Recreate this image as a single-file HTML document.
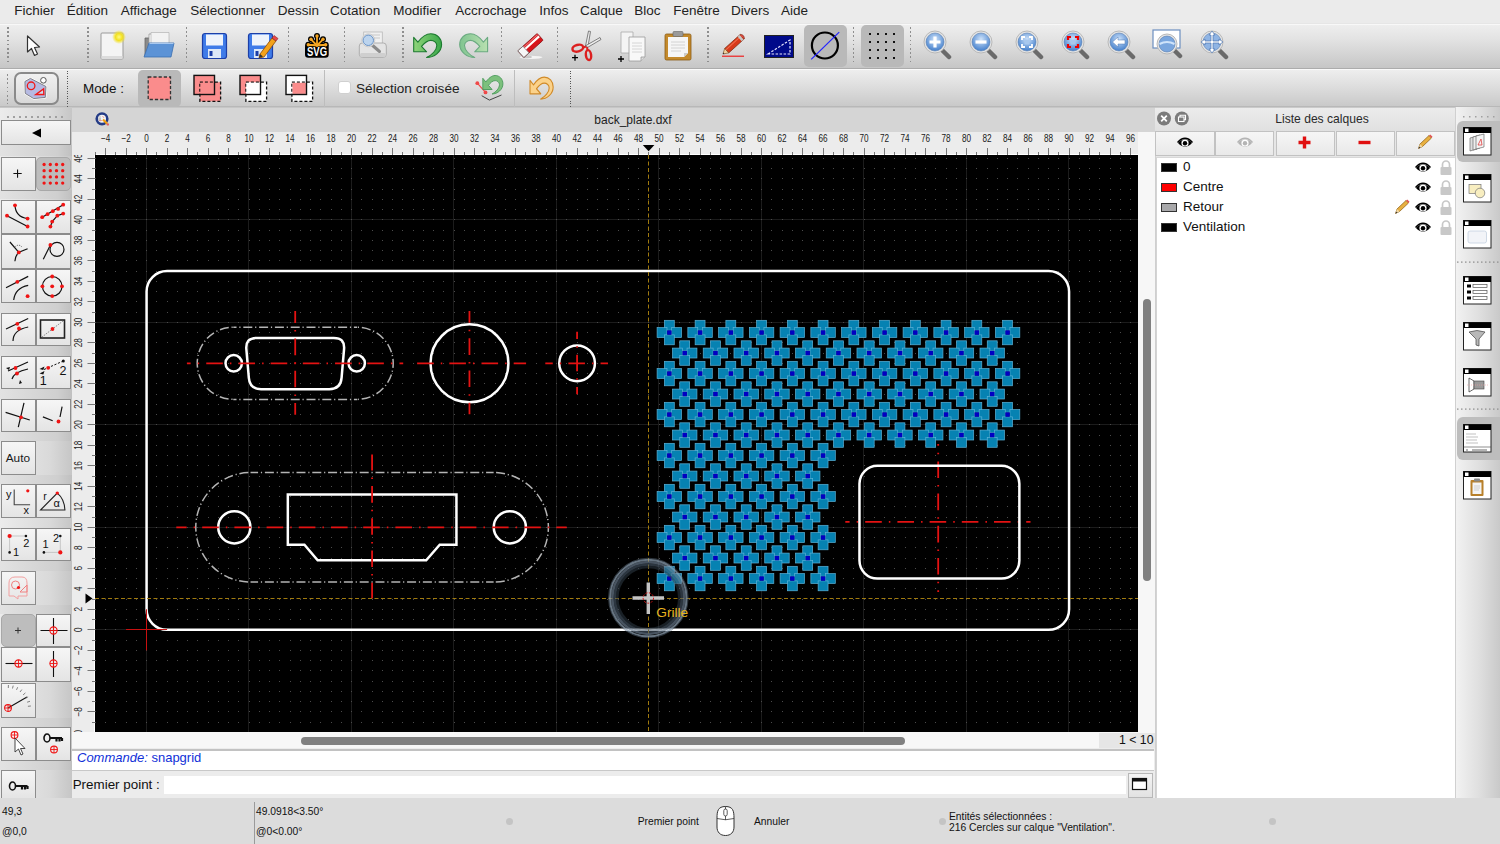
<!DOCTYPE html><html><head><meta charset="utf-8"><style>
*{margin:0;padding:0;box-sizing:border-box}
html,body{width:1500px;height:844px;overflow:hidden;background:#e6e6e6;font-family:"Liberation Sans",sans-serif;color:#1a1a1a}
.a{position:absolute}
#menubar{left:0;top:0;width:1500px;height:23px;background:#ebebeb;font-size:13.5px}
#menubar span{position:absolute;top:3px;color:#222}
#tb1{left:0;top:23.5px;width:1500px;height:45px;background:linear-gradient(#eeeeee,#e2e2e2 35%,#c6c6c6);border-top:1px solid #f8f8f8;border-bottom:1.5px solid #acacac}
#tb2{left:0;top:68.5px;width:1500px;height:38.5px;background:linear-gradient(#eeeeee,#dedede 45%,#c9c9c9);border-top:1px solid #fafafa;border-bottom:1px solid #b8b8b8}
.vsep{position:absolute;width:1.6px;background:repeating-linear-gradient(#8e8e8e 0 1.6px,transparent 1.6px 4.2px)}
.pressed{position:absolute;background:#b9b9b9;border-radius:5px}
#lefttb{left:0;top:107px;width:72px;height:691px;background:linear-gradient(90deg,#ececec,#d9d9d9 70%,#c6c6c6)}
.btn{position:absolute;width:35px;height:35px;border:1px solid #8c8c8c;background:linear-gradient(#f6f6f6,#e4e4e4)}
.btnp{position:absolute;width:35px;height:35px;border:1px solid #a8a8a8;border-radius:5px;background:#bdbdbd}
#status{left:0;top:798px;width:1500px;height:46px;background:#dcdcdc;font-size:10px;color:#1a1a1a}
.sdot{position:absolute;width:8px;height:8px;border-radius:4px;background:#c4c4c4}
</style></head><body>
<div id="menubar" class="a">
<span style="left:14.3px">Fichier</span>
<span style="left:66.7px">Édition</span>
<span style="left:120.7px">Affichage</span>
<span style="left:190.3px">Sélectionner</span>
<span style="left:277.7px">Dessin</span>
<span style="left:330px">Cotation</span>
<span style="left:393.3px">Modifier</span>
<span style="left:455.3px">Accrochage</span>
<span style="left:539.3px">Infos</span>
<span style="left:580px">Calque</span>
<span style="left:634.3px">Bloc</span>
<span style="left:673.3px">Fenêtre</span>
<span style="left:731px">Divers</span>
<span style="left:781px">Aide</span>
</div>
<div id="tb1" class="a"></div>
<div class="vsep" style="left:7.2px;top:27px;height:38px"></div>
<div class="vsep" style="left:87.2px;top:27px;height:38px"></div>
<div class="vsep" style="left:185.6px;top:27px;height:38px"></div>
<div class="vsep" style="left:287.8px;top:27px;height:38px"></div>
<div class="vsep" style="left:343.8px;top:27px;height:38px"></div>
<div class="vsep" style="left:402.2px;top:27px;height:38px"></div>
<div class="vsep" style="left:500.59999999999997px;top:27px;height:38px"></div>
<div class="vsep" style="left:556.8000000000001px;top:27px;height:38px"></div>
<div class="vsep" style="left:707.2px;top:27px;height:38px"></div>
<div class="vsep" style="left:852.8000000000001px;top:27px;height:38px"></div>
<div class="vsep" style="left:909.6px;top:27px;height:38px"></div>
<div class="pressed" style="left:804px;top:25px;width:43px;height:42px"></div>
<div class="pressed" style="left:861px;top:25px;width:43px;height:42px"></div>
<div id="tb2" class="a"></div>
<div class="vsep" style="left:6.5px;top:74px;height:30px"></div>
<div class="a" style="left:14.3px;top:72px;width:44.5px;height:32.5px;border:2px solid #8a8a8a;border-radius:7px;background:linear-gradient(#f0f0f0,#e6e6e6 50%,#d8d8d8)"></div>
<div class="vsep" style="left:66.5px;top:71px;height:36px;width:1px;background:repeating-linear-gradient(#555 0 1px,transparent 1px 2.5px)"></div>
<div class="a" style="left:83px;top:81px;font-size:13.4px;color:#111">Mode :</div>
<div class="pressed" style="left:138px;top:70px;width:43px;height:37px"></div>
<div class="a" style="left:324px;top:70px;width:1px;height:37px;background:#fafafa;border-left:1px solid #bdbdbd"></div>
<div class="a" style="left:337.5px;top:81px;width:13px;height:13px;border-radius:3px;background:#fff;border:1px solid #d0d0d0"></div>
<div class="a" style="left:356px;top:80.5px;font-size:13.6px;color:#222">Sélection croisée</div>
<div class="a" style="left:514px;top:70px;width:1px;height:37px;background:#fafafa;border-left:1px solid #bdbdbd"></div>
<div class="vsep" style="left:569.5px;top:71px;height:36px;width:1px;background:repeating-linear-gradient(#555 0 1px,transparent 1px 2.5px)"></div>
<svg class="a" style="left:25px;top:34px;" width="18" height="24" viewBox="0 0 18 24"><path d="M2.5 2 L2.5 18 L6.5 14.5 L9.5 21.5 L12.5 20 L9.5 13.5 L14.5 13 Z" fill="#fff" stroke="#333" stroke-width="1.2" stroke-linejoin="round"/></svg>
<svg class="a" style="left:98px;top:30px;" width="30" height="32" viewBox="0 0 30 32"><defs><radialGradient id="glow"><stop offset="0" stop-color="#fffb80"/><stop offset="0.5" stop-color="#f2e020"/><stop offset="1" stop-color="#f2e020" stop-opacity="0"/></radialGradient></defs><rect x="3" y="3" width="22" height="26" rx="1" fill="#f4f4f4" stroke="#9a9a9a" stroke-width="1"/><rect x="3.5" y="26" width="21" height="3" fill="#dcdcdc"/><circle cx="21" cy="7" r="7" fill="url(#glow)"/></svg>
<svg class="a" style="left:141px;top:30px;" width="36" height="32" viewBox="0 0 36 32"><path d="M4 8 L14 8 L16 6 L24 6 L24 26 L4 26 Z" fill="#8a8a8a" stroke="#666" stroke-width="0.8"/><path d="M8 4 L27 4 L27 20 L8 20 Z" fill="#fafafa" stroke="#999" stroke-width="0.8"/><path d="M10 2.5 L28 2.5 L28 18 L10 18 Z" fill="#f2f2f2" stroke="#aaa" stroke-width="0.6"/><path d="M3 27 L8 13 L33 13 L30 27 Z" fill="#5c93d6" stroke="#3b6fb0" stroke-width="0.8"/><path d="M8.5 13.5 L32.5 13.5" stroke="#a9c8ee" stroke-width="1"/></svg>
<svg class="a" style="left:201px;top:32px;" width="28" height="29" viewBox="0 0 28 29"><rect x="1.5" y="1.5" width="24" height="25" rx="2.5" fill="#3f7be8" stroke="#1c3fa8" stroke-width="1.2"/><rect x="5" y="2.5" width="17" height="11" fill="#eef3fb"/><rect x="7" y="17" width="13" height="9" fill="#dde8f8"/><rect x="8.5" y="19" width="3" height="5" fill="#1c3fa8"/></svg>
<svg class="a" style="left:247px;top:30px;" width="33" height="31" viewBox="0 0 33 31"><g transform="translate(0,2)"><rect x="1.5" y="1.5" width="24" height="25" rx="2.5" fill="#3f7be8" stroke="#1c3fa8" stroke-width="1.2"/><rect x="5" y="2.5" width="17" height="11" fill="#eef3fb"/><rect x="7" y="17" width="13" height="9" fill="#dde8f8"/><rect x="8.5" y="19" width="3" height="5" fill="#1c3fa8"/><path d="M13 22 L25 6 L29 9 L17 25 L12 26 Z" fill="#f3a21b" stroke="#8a4a06" stroke-width="0.8"/><path d="M25 6 L27 3.5 L31 6.5 L29 9 Z" fill="#e84848" stroke="#8a2020" stroke-width="0.6"/><path d="M12 26 L13 22 L16 24.5 Z" fill="#333"/></g></svg>
<svg class="a" style="left:303px;top:32px;" width="28" height="28" viewBox="0 0 28 28"><path d="M14 13.5 L5.3 12.7" stroke="#000" stroke-width="4.2" stroke-linecap="round"/><path d="M14 13.5 L8 7.3" stroke="#000" stroke-width="4.2" stroke-linecap="round"/><path d="M14 13.5 L14 4" stroke="#000" stroke-width="4.2" stroke-linecap="round"/><path d="M14 13.5 L20 7.3" stroke="#000" stroke-width="4.2" stroke-linecap="round"/><path d="M14 13.5 L22.7 12.7" stroke="#000" stroke-width="4.2" stroke-linecap="round"/><circle cx="5.3" cy="12.7" r="3" fill="#000"/><circle cx="8" cy="7.3" r="3" fill="#000"/><circle cx="14" cy="4" r="3" fill="#000"/><circle cx="20" cy="7.3" r="3" fill="#000"/><circle cx="22.7" cy="12.7" r="3" fill="#000"/><rect x="2" y="11.5" width="23.7" height="14.2" rx="3.2" fill="#000"/><path d="M14 13.5 L5.3 12.7" stroke="#f5a623" stroke-width="1.8" stroke-linecap="round"/><path d="M14 13.5 L8 7.3" stroke="#f5a623" stroke-width="1.8" stroke-linecap="round"/><path d="M14 13.5 L14 4" stroke="#f5a623" stroke-width="1.8" stroke-linecap="round"/><path d="M14 13.5 L20 7.3" stroke="#f5a623" stroke-width="1.8" stroke-linecap="round"/><path d="M14 13.5 L22.7 12.7" stroke="#f5a623" stroke-width="1.8" stroke-linecap="round"/><circle cx="5.3" cy="12.7" r="1.7" fill="#f5a623"/><circle cx="8" cy="7.3" r="1.7" fill="#f5a623"/><circle cx="14" cy="4" r="1.7" fill="#f5a623"/><circle cx="20" cy="7.3" r="1.7" fill="#f5a623"/><circle cx="22.7" cy="12.7" r="1.7" fill="#f5a623"/><path d="M4.5 13.3 H23.3" stroke="#f5a623" stroke-width="1.6"/><text transform="translate(14 24.3) scale(0.78 1)" text-anchor="middle" font-family="Liberation Sans" font-weight="bold" font-size="12.2" fill="#fff">SVG</text></svg>
<svg class="a" style="left:357px;top:30px;" width="32" height="30" viewBox="0 0 32 30"><rect x="6.7" y="2" width="18.6" height="15" fill="#f0f0f0" stroke="#b8b8b8" stroke-width="0.8"/><path d="M9 5 h14 M9 8 h14" stroke="#c8c8c8" stroke-width="1"/><rect x="2.3" y="13" width="27" height="14.3" rx="3" fill="#e4e4e4" stroke="#a8a8a8" stroke-width="0.9"/><rect x="3" y="23" width="25.6" height="4" rx="1.5" fill="#cfcfcf"/><path d="M14.5 14.5 L22.5 21.5" stroke="#8a8a8a" stroke-width="3" stroke-linecap="round"/><circle cx="11.3" cy="10.3" r="6.5" fill="#e8e8e8" stroke="#c4c4c4" stroke-width="0.8"/><circle cx="11.3" cy="10.3" r="5.2" fill="#bcd4ee" stroke="#6a94c8" stroke-width="1"/></svg>
<svg class="a" style="left:412px;top:30px;" width="32" height="32" viewBox="0 0 32 32"><defs><linearGradient id="ug" x1="0" y1="0" x2="1" y2="0"><stop offset="0" stop-color="#8fd47a"/><stop offset="1" stop-color="#3aa84a"/></linearGradient></defs><path d="M1.7 7.4 L5.9 12.2 C9 8 14 3.8 18.8 3.8 C25 3.8 29.6 8.5 29.6 14.5 C29.6 22 22 27.5 14.6 27.5 C20 25 24.8 20 24.8 15.5 C24.8 12.5 22 10.4 18.8 10.4 C15 10.4 12 13.5 9.5 16.4 L14.6 21.8 L1.7 21.8 Z" fill="url(#ug)" stroke="#1d7a30" stroke-width="1.1" stroke-linejoin="round"/></svg>
<svg class="a" style="left:458px;top:30px;" width="32" height="32" viewBox="0 0 32 32"><defs><linearGradient id="rg" x1="0" y1="0" x2="1" y2="0"><stop offset="0" stop-color="#b8e0b0"/><stop offset="1" stop-color="#80c490"/></linearGradient></defs><g transform="translate(31.3,0) scale(-1,1)"><path d="M1.7 7.4 L5.9 12.2 C9 8 14 3.8 18.8 3.8 C25 3.8 29.6 8.5 29.6 14.5 C29.6 22 22 27.5 14.6 27.5 C20 25 24.8 20 24.8 15.5 C24.8 12.5 22 10.4 18.8 10.4 C15 10.4 12 13.5 9.5 16.4 L14.6 21.8 L1.7 21.8 Z" fill="url(#rg)" stroke="#6aaa80" stroke-width="1.1" stroke-linejoin="round"/></g></svg>
<svg class="a" style="left:515px;top:30px;" width="32" height="32" viewBox="0 0 32 32"><ellipse cx="16" cy="27.3" rx="11.5" ry="1.6" fill="#f4f4f4"/><ellipse cx="12" cy="27" rx="5" ry="1.2" fill="#9a9a9a" opacity="0.5"/><g transform="rotate(-42 15.5 15.5)"><rect x="2.5" y="11" width="26" height="9" rx="1" fill="#d8141a" stroke="#8a0c10" stroke-width="0.8"/><rect x="2.5" y="11" width="7" height="9" fill="#f6f6f6" stroke="#777" stroke-width="0.8"/><path d="M9.5 14.5 H28" stroke="#fff" stroke-width="2.2"/><path d="M9.5 12.2 H28" stroke="#f07070" stroke-width="1"/></g></svg>
<svg class="a" style="left:569px;top:29px;" width="34" height="36" viewBox="0 0 34 36"><path d="M19.5 2 L21.5 2.5 L19 17.5 L16.5 17 Z" fill="#ececec" stroke="#666" stroke-width="0.8"/><path d="M31 8.5 L32 10.5 L18.5 18.5 L17 16.5 Z" fill="#ececec" stroke="#666" stroke-width="0.8"/><ellipse cx="8.8" cy="19.2" rx="5.5" ry="3.3" transform="rotate(-15 8.8 19.2)" fill="none" stroke="#dc2020" stroke-width="2.4"/><ellipse cx="19.5" cy="26.1" rx="2.6" ry="5" transform="rotate(-8 19.5 26.1)" fill="none" stroke="#dc2020" stroke-width="2.4"/><path d="M14 18.5 L17 17.5 M18.5 21 L18 18" stroke="#dc2020" stroke-width="2"/><path d="M3 28.7 h6 M6 25.7 v6" stroke="#000" stroke-width="1.3"/></svg>
<svg class="a" style="left:615px;top:29px;" width="36" height="36" viewBox="0 0 36 36"><path d="M6 3 L18 3 L18 24 L6 24 Z" fill="#f4f4f4" stroke="#aaa" stroke-width="0.8"/><path d="M14 8 L30 8 L30 28 L26 32 L14 32 Z" fill="#f8f8f8" stroke="#999" stroke-width="0.8"/><path d="M26 32 L26 28 L30 28" fill="#ddd" stroke="#999" stroke-width="0.8"/><path d="M17 14h10M17 17h10M17 20h10M17 23h10" stroke="#ccc" stroke-width="0.8"/><path d="M3 30 h6 M6 27 v6" stroke="#000" stroke-width="1.3"/></svg>
<svg class="a" style="left:662px;top:30px;" width="32" height="32" viewBox="0 0 32 32"><rect x="3" y="4" width="26" height="26" rx="1.5" fill="#c48a2c" stroke="#8a5a14" stroke-width="0.8"/><path d="M6 7 L26 7 L26 23 L22 27 L6 27 Z" fill="#f6f6f6"/><path d="M22 27 L22 23 L26 23" fill="#ccc"/><path d="M9 12h14M9 15h14M9 18h14M9 21h10" stroke="#ccc" stroke-width="0.8"/><rect x="11" y="1.5" width="10" height="5" rx="1" fill="#9a9a9a" stroke="#666" stroke-width="0.6"/></svg>
<svg class="a" style="left:720px;top:30px;overflow:visible" width="28" height="30" viewBox="0 0 28 30"><g transform="rotate(-42 13 15)"><rect x="4.5" y="12" width="21" height="6" fill="#d83a1a" stroke="#7a2a10" stroke-width="0.7"/><path d="M4.5 13.8 H25.5" stroke="#f07050" stroke-width="1"/><rect x="22" y="12" width="2.5" height="6" fill="#c8c8c8"/><path d="M25.5 12 Q28.5 15 25.5 18" fill="#e84040" stroke="#7a2a10" stroke-width="0.6"/><path d="M4.5 12 L-0.5 15 L4.5 18 Z" fill="#f2d2a0" stroke="#7a4a20" stroke-width="0.6"/><path d="M0.8 14.2 L-0.5 15 L0.8 15.8 Z" fill="#222"/></g><path d="M2 26.2 h22" stroke="#f01010" stroke-width="1.1"/></svg>
<svg class="a" style="left:764px;top:35px;" width="30" height="23" viewBox="0 0 30 23"><rect x="0.5" y="0.5" width="29" height="22" fill="#000a8a" stroke="#222" stroke-width="1"/><path d="M4 19 L26 5 L26 19 Z" fill="none" stroke="#e8e8ff" stroke-width="1.2" stroke-dasharray="2.5 1.5"/></svg>
<svg class="a" style="left:808px;top:26px;" width="36" height="36" viewBox="0 0 36 36"><circle cx="16.9" cy="19.5" r="13" fill="none" stroke="#000" stroke-width="2.2"/><path d="M3.2 33.4 L31.2 6.1" stroke="#2222ff" stroke-width="1.2"/></svg>
<svg class="a" style="left:864px;top:30px;" width="36" height="32" viewBox="0 0 36 32"><rect x="5" y="3" width="2" height="2" fill="#111"/><rect x="5" y="11" width="2" height="2" fill="#111"/><rect x="5" y="19" width="2" height="2" fill="#111"/><rect x="5" y="27" width="2" height="2" fill="#111"/><rect x="13" y="3" width="2" height="2" fill="#111"/><rect x="13" y="11" width="2" height="2" fill="#111"/><rect x="13" y="19" width="2" height="2" fill="#111"/><rect x="13" y="27" width="2" height="2" fill="#111"/><rect x="21" y="3" width="2" height="2" fill="#111"/><rect x="21" y="11" width="2" height="2" fill="#111"/><rect x="21" y="19" width="2" height="2" fill="#111"/><rect x="21" y="27" width="2" height="2" fill="#111"/><rect x="29" y="3" width="2" height="2" fill="#111"/><rect x="29" y="11" width="2" height="2" fill="#111"/><rect x="29" y="19" width="2" height="2" fill="#111"/><rect x="29" y="27" width="2" height="2" fill="#111"/></svg>
<svg class="a" style="left:923.3px;top:29.8px;" width="30" height="30" viewBox="0 0 30 30"><defs><radialGradient id="lg935" cx="0.5" cy="0.35" r="0.6"><stop offset="0" stop-color="#cfe3fa"/><stop offset="1" stop-color="#4d86cf"/></radialGradient></defs><path d="M19 20 L26 27" stroke="#6a6a6a" stroke-width="4.5" stroke-linecap="round"/><circle cx="12" cy="12" r="11" fill="#e6e6e6" stroke="#b8b8b8" stroke-width="1"/><circle cx="12" cy="12" r="9" fill="url(#lg935)" stroke="#5a7fb0" stroke-width="0.6"/><path d="M12 6.5 v11 M6.5 12 h11" stroke="#fff" stroke-width="3.2"/></svg>
<svg class="a" style="left:968.8px;top:29.8px;" width="30" height="30" viewBox="0 0 30 30"><defs><radialGradient id="lg980" cx="0.5" cy="0.35" r="0.6"><stop offset="0" stop-color="#cfe3fa"/><stop offset="1" stop-color="#4d86cf"/></radialGradient></defs><path d="M19 20 L26 27" stroke="#6a6a6a" stroke-width="4.5" stroke-linecap="round"/><circle cx="12" cy="12" r="11" fill="#e6e6e6" stroke="#b8b8b8" stroke-width="1"/><circle cx="12" cy="12" r="9" fill="url(#lg980)" stroke="#5a7fb0" stroke-width="0.6"/><path d="M6.5 12 h11" stroke="#fff" stroke-width="3.2"/></svg>
<svg class="a" style="left:1015px;top:29.8px;" width="30" height="30" viewBox="0 0 30 30"><defs><radialGradient id="lg1027" cx="0.5" cy="0.35" r="0.6"><stop offset="0" stop-color="#cfe3fa"/><stop offset="1" stop-color="#4d86cf"/></radialGradient></defs><path d="M19 20 L26 27" stroke="#6a6a6a" stroke-width="4.5" stroke-linecap="round"/><circle cx="12" cy="12" r="11" fill="#e6e6e6" stroke="#b8b8b8" stroke-width="1"/><circle cx="12" cy="12" r="9" fill="url(#lg1027)" stroke="#5a7fb0" stroke-width="0.6"/><path d="M7 10 v-3 h3 M14 7 h3 v3 M17 14 v3 h-3 M10 17 h-3 v-3" fill="none" stroke="#fff" stroke-width="1.8"/><rect x="9.5" y="9.5" width="5" height="5" fill="#a8c8ee"/></svg>
<svg class="a" style="left:1060.8px;top:29.8px;" width="30" height="30" viewBox="0 0 30 30"><defs><radialGradient id="lg1072" cx="0.5" cy="0.35" r="0.6"><stop offset="0" stop-color="#cfe3fa"/><stop offset="1" stop-color="#4d86cf"/></radialGradient></defs><path d="M19 20 L26 27" stroke="#6a6a6a" stroke-width="4.5" stroke-linecap="round"/><circle cx="12" cy="12" r="11" fill="#e6e6e6" stroke="#b8b8b8" stroke-width="1"/><circle cx="12" cy="12" r="9" fill="url(#lg1072)" stroke="#5a7fb0" stroke-width="0.6"/><path d="M7 10 v-3 h3 M14 7 h3 v3 M17 14 v3 h-3 M10 17 h-3 v-3" fill="none" stroke="#e00" stroke-width="2.2"/><rect x="9.5" y="9.5" width="5" height="5" fill="#a8c8ee"/></svg>
<svg class="a" style="left:1107px;top:29.8px;" width="30" height="30" viewBox="0 0 30 30"><defs><radialGradient id="lg1119" cx="0.5" cy="0.35" r="0.6"><stop offset="0" stop-color="#cfe3fa"/><stop offset="1" stop-color="#4d86cf"/></radialGradient></defs><path d="M19 20 L26 27" stroke="#6a6a6a" stroke-width="4.5" stroke-linecap="round"/><circle cx="12" cy="12" r="11" fill="#e6e6e6" stroke="#b8b8b8" stroke-width="1"/><circle cx="12" cy="12" r="9" fill="url(#lg1119)" stroke="#5a7fb0" stroke-width="0.6"/><path d="M5.5 12 L11 7 L11 10 L18 10 L18 14 L11 14 L11 17 Z" fill="#fff" stroke="#4a74b0" stroke-width="0.5"/></svg>
<svg class="a" style="left:1152px;top:29px;" width="36" height="30" viewBox="0 0 36 30"><rect x="1" y="1" width="27" height="18" fill="#fff" stroke="#6d8fc0" stroke-width="1.2"/><path d="M21 20 L28 27" stroke="#6a6a6a" stroke-width="4.5" stroke-linecap="round"/><circle cx="15" cy="15" r="10" fill="#e6e6e6" stroke="#b8b8b8" stroke-width="1"/><circle cx="15" cy="15" r="8" fill="#7aa6de" stroke="#5a7fb0" stroke-width="0.6"/><path d="M7.5 15 Q15 11 22.5 15" fill="none" stroke="#cfe3fa" stroke-width="2"/></svg>
<svg class="a" style="left:1199.9px;top:29.8px;" width="32" height="30" viewBox="0 0 32 30"><path d="M19 20 L26 27" stroke="#6a6a6a" stroke-width="4.5" stroke-linecap="round"/><circle cx="12" cy="12" r="11" fill="#e6e6e6" stroke="#b8b8b8" stroke-width="1"/><circle cx="12" cy="12" r="9" fill="#8fb4e4" stroke="#5a7fb0" stroke-width="0.6"/><path d="M12 1 L15 5 L13 5 L13 11 L19 11 L19 9 L23 12 L19 15 L19 13 L13 13 L13 19 L15 19 L12 23 L9 19 L11 19 L11 13 L5 13 L5 15 L1 12 L5 9 L5 11 L11 11 L11 5 L9 5 Z" fill="#fff" stroke="#4a74b0" stroke-width="0.7"/></svg>
<svg class="a" style="left:22px;top:75px;" width="32" height="26" viewBox="0 0 32 26"><path d="M2.9 6.5 L8.4 3.4 L24 11.5 L23.3 22.4 L11.7 23.6 L3.2 18.4 Z" fill="#b6bae2" stroke="#fff" stroke-width="2.2" stroke-linejoin="round"/><path d="M2.9 6.5 L8.4 3.4 L24 11.5 L23.3 22.4 L11.7 23.6 L3.2 18.4 Z" fill="#b6bae2" stroke="#6a6a6a" stroke-width="0.8" stroke-linejoin="round"/><circle cx="9.1" cy="10.8" r="3.8" fill="none" stroke="#f01818" stroke-width="1.3"/><path d="M13.8 19.5 L21.6 13.9 L21.9 19.5 Z" fill="#c8dcf0" stroke="#f01818" stroke-width="1.4" stroke-linejoin="miter"/><circle cx="21.4" cy="5.3" r="2.8" fill="#fff" stroke="#555" stroke-width="1"/></svg>
<svg class="a" style="left:146px;top:75px;" width="27" height="27" viewBox="0 0 27 27"><rect x="2.2" y="2" width="22.3" height="22.5" fill="#fa8c8c" stroke="#333" stroke-width="1.3" stroke-dasharray="3.2 2"/></svg>
<svg class="a" style="left:192.0px;top:73px;" width="32" height="31" viewBox="0 0 32 31"><rect x="2" y="2.4" width="20.5" height="19.1" fill="#fa8c8c"/><rect x="7.9" y="9.2" width="20.7" height="19.1" fill="#fa8c8c" stroke="#111" stroke-width="1.3" stroke-dasharray="3 2"/><rect x="8.5" y="9.799999999999999" width="13.4" height="11.100000000000001" fill="#fa8c8c"/><rect x="2" y="2.4" width="20.5" height="19.1" fill="none" stroke="#111" stroke-width="1.4"/></svg>
<svg class="a" style="left:238.0px;top:73px;" width="32" height="31" viewBox="0 0 32 31"><rect x="2" y="2.4" width="20.5" height="19.1" fill="#fa8c8c"/><rect x="7.9" y="9.2" width="20.7" height="19.1" fill="#fff" stroke="#111" stroke-width="1.3" stroke-dasharray="3 2"/><rect x="8.5" y="9.799999999999999" width="13.4" height="11.100000000000001" fill="#fff"/><rect x="2" y="2.4" width="20.5" height="19.1" fill="none" stroke="#111" stroke-width="1.4"/></svg>
<svg class="a" style="left:284.0px;top:73px;" width="32" height="31" viewBox="0 0 32 31"><rect x="2" y="2.4" width="20.5" height="19.1" fill="#fff"/><rect x="7.9" y="9.2" width="20.7" height="19.1" fill="#fff" stroke="#111" stroke-width="1.3" stroke-dasharray="3 2"/><rect x="8.5" y="9.799999999999999" width="13.4" height="11.100000000000001" fill="#fa8c8c"/><rect x="2" y="2.4" width="20.5" height="19.1" fill="none" stroke="#111" stroke-width="1.4"/></svg>
<svg class="a" style="left:473px;top:73px;" width="32" height="32" viewBox="0 0 32 32"><path d="M8.7 22.7 L16.4 27.1 L28.5 22" fill="none" stroke="#444" stroke-width="1"/><path d="M4.3 10.2 L12.5 19.4" stroke="#f04848" stroke-width="1.2"/><circle cx="4.3" cy="10.2" r="1.9" fill="#f04848"/><circle cx="12.5" cy="19.4" r="1.9" fill="#f04848"/><g transform="translate(8.6,-0.5) scale(0.72 0.78)"><path d="M1.7 7.4 L5.9 12.2 C9 8 14 3.8 18.8 3.8 C25 3.8 29.6 8.5 29.6 14.5 C29.6 22 22 27.5 14.6 27.5 C20 25 24.8 20 24.8 15.5 C24.8 12.5 22 10.4 18.8 10.4 C15 10.4 12 13.5 9.5 16.4 L14.6 21.8 L1.7 21.8 Z" fill="#7cc07c" stroke="#4a9a5a" stroke-width="1.2" stroke-linejoin="round"/></g></svg>
<svg class="a" style="left:528px;top:73px;" width="28" height="28" viewBox="0 0 28 28"><g transform="translate(0.6,0.5) scale(0.83 0.93)"><path d="M1.7 7.4 L5.9 12.2 C9 8 14 3.8 18.8 3.8 C25 3.8 29.6 8.5 29.6 14.5 C29.6 22 22 27.5 14.6 27.5 C20 25 24.8 20 24.8 15.5 C24.8 12.5 22 10.4 18.8 10.4 C15 10.4 12 13.5 9.5 16.4 L14.6 21.8 L1.7 21.8 Z" fill="#fbd28a" stroke="#d08a28" stroke-width="1.3" stroke-linejoin="round"/></g></svg>
<div id="lefttb" class="a"></div>
<div class="a" style="left:0;top:145.3px;width:72px;height:11.199999999999989px;background:linear-gradient(90deg,#e2e2e2,#cfcfcf 80%,#c0c0c0)"></div>
<div class="a" style="left:0;top:190.3px;width:72px;height:9.199999999999989px;background:linear-gradient(90deg,#e2e2e2,#cfcfcf 80%,#c0c0c0)"></div>
<div class="a" style="left:0;top:303.2px;width:72px;height:9.800000000000011px;background:linear-gradient(90deg,#e2e2e2,#cfcfcf 80%,#c0c0c0)"></div>
<div class="a" style="left:0;top:346px;width:72px;height:10px;background:linear-gradient(90deg,#e2e2e2,#cfcfcf 80%,#c0c0c0)"></div>
<div class="a" style="left:0;top:389px;width:72px;height:9.800000000000011px;background:linear-gradient(90deg,#e2e2e2,#cfcfcf 80%,#c0c0c0)"></div>
<div class="a" style="left:0;top:432.3px;width:72px;height:9.0px;background:linear-gradient(90deg,#e2e2e2,#cfcfcf 80%,#c0c0c0)"></div>
<div class="a" style="left:0;top:475.4px;width:72px;height:8.800000000000011px;background:linear-gradient(90deg,#e2e2e2,#cfcfcf 80%,#c0c0c0)"></div>
<div class="a" style="left:0;top:561px;width:72px;height:9.600000000000023px;background:linear-gradient(90deg,#e2e2e2,#cfcfcf 80%,#c0c0c0)"></div>
<div class="a" style="left:0;top:604.8px;width:72px;height:9.0px;background:linear-gradient(90deg,#e2e2e2,#cfcfcf 80%,#c0c0c0)"></div>
<div class="a" style="left:0;top:717.6px;width:72px;height:9.0px;background:linear-gradient(90deg,#e2e2e2,#cfcfcf 80%,#c0c0c0)"></div>
<div class="a" style="left:0;top:760.5px;width:72px;height:9.0px;background:linear-gradient(90deg,#e2e2e2,#cfcfcf 80%,#c0c0c0)"></div>
<div class="a" style="left:0;top:107px;width:72px;height:1px;background:#c8c8c8"></div>
<svg class="a" style="left:0;top:113px" width="72" height="8"><rect x="7" y="3" width="2" height="2" fill="#a0a0a0"/><rect x="13" y="3" width="2" height="2" fill="#a0a0a0"/><rect x="19" y="3" width="2" height="2" fill="#a0a0a0"/><rect x="25" y="3" width="2" height="2" fill="#a0a0a0"/><rect x="31" y="3" width="2" height="2" fill="#a0a0a0"/><rect x="37" y="3" width="2" height="2" fill="#a0a0a0"/><rect x="43" y="3" width="2" height="2" fill="#a0a0a0"/><rect x="49" y="3" width="2" height="2" fill="#a0a0a0"/><rect x="55" y="3" width="2" height="2" fill="#a0a0a0"/><rect x="61" y="3" width="2" height="2" fill="#a0a0a0"/></svg>
<div class="btn" style="left:1.2px;top:120.2px;width:69.4px;height:25.3px"></div>
<svg class="a" style="left:30px;top:126px;" width="14" height="14" viewBox="0 0 14 14"><path d="M2 7 L11 2.5 L11 11.5 Z" fill="#000"/></svg>
<div class="btn" style="left:1.2px;top:156.5px;width:34.5px;height:34.0px"></div>
<svg class="a" style="left:1.2px;top:156.5px;overflow:visible" width="35" height="34" viewBox="0 0 35 34"><path d="M12.4 16.5 h8.3 M16.55 12.4 v8.3" stroke="#111" stroke-width="1.1"/></svg>
<div class="btnp" style="left:36.3px;top:156.5px;width:34.5px;height:34.0px"></div>
<svg class="a" style="left:36.3px;top:156.5px;overflow:visible" width="35" height="34" viewBox="0 0 35 34"><circle cx="8.1" cy="7.5" r="1.65" fill="#f01414"/><circle cx="8.1" cy="13.7" r="1.65" fill="#f01414"/><circle cx="8.1" cy="19.9" r="1.65" fill="#f01414"/><circle cx="8.1" cy="26.1" r="1.65" fill="#f01414"/><circle cx="14.3" cy="7.5" r="1.65" fill="#f01414"/><circle cx="14.3" cy="13.7" r="1.65" fill="#f01414"/><circle cx="14.3" cy="19.9" r="1.65" fill="#f01414"/><circle cx="14.3" cy="26.1" r="1.65" fill="#f01414"/><circle cx="20.5" cy="7.5" r="1.65" fill="#f01414"/><circle cx="20.5" cy="13.7" r="1.65" fill="#f01414"/><circle cx="20.5" cy="19.9" r="1.65" fill="#f01414"/><circle cx="20.5" cy="26.1" r="1.65" fill="#f01414"/><circle cx="26.700000000000003" cy="7.5" r="1.65" fill="#f01414"/><circle cx="26.700000000000003" cy="13.7" r="1.65" fill="#f01414"/><circle cx="26.700000000000003" cy="19.9" r="1.65" fill="#f01414"/><circle cx="26.700000000000003" cy="26.1" r="1.65" fill="#f01414"/></svg>
<div class="btn" style="left:1.2px;top:199.5px;width:34.5px;height:34.5px"></div>
<svg class="a" style="left:1.2px;top:199.5px;overflow:visible" width="35" height="34" viewBox="0 0 35 34"><path d="M6 15.7 L26.6 26.5" stroke="#111" stroke-width="1.2" fill="none"/><path d="M14 5.3 Q14.5 17 26.6 18.6" stroke="#111" stroke-width="1.2" fill="none"/><circle cx="6" cy="15.7" r="1.9" fill="#f01414"/><circle cx="26.6" cy="26.5" r="1.9" fill="#f01414"/><circle cx="14" cy="5.3" r="1.9" fill="#f01414"/><circle cx="26.6" cy="18.6" r="1.9" fill="#f01414"/></svg>
<div class="btn" style="left:36.3px;top:199.5px;width:34.5px;height:34.5px"></div>
<svg class="a" style="left:36.3px;top:199.5px;overflow:visible" width="35" height="34" viewBox="0 0 35 34"><path d="M6.2 17.2 L27.2 4.7 M14.4 26.6 L16.2 21.6 L21.3 15.7 L27.2 13.6" stroke="#111" stroke-width="1.2" fill="none"/><circle cx="6.2" cy="17.2" r="1.9" fill="#f01414"/><circle cx="11.5" cy="14.2" r="1.9" fill="#f01414"/><circle cx="16.8" cy="11.2" r="1.9" fill="#f01414"/><circle cx="22.1" cy="8.9" r="1.9" fill="#f01414"/><circle cx="27.2" cy="4.7" r="1.9" fill="#f01414"/><circle cx="14.4" cy="26.6" r="1.9" fill="#f01414"/><circle cx="16.2" cy="21.6" r="1.9" fill="#f01414"/><circle cx="21.3" cy="15.7" r="1.9" fill="#f01414"/><circle cx="27.2" cy="13.6" r="1.9" fill="#f01414"/></svg>
<div class="btn" style="left:1.2px;top:234px;width:34.5px;height:34.5px"></div>
<svg class="a" style="left:1.2px;top:234px;overflow:visible" width="35" height="34" viewBox="0 0 35 34"><path d="M8.9 8 L17.8 18.4 L26.6 14.8 M17.8 18.4 Q14 22 13.9 27.3" stroke="#111" stroke-width="1.2" fill="none"/><path d="M13 14 Q17 9 21 13" stroke="#333" stroke-width="0.8" fill="none" stroke-dasharray="1 1"/><circle cx="17.8" cy="18.4" r="1.9" fill="#f01414"/></svg>
<div class="btn" style="left:36.3px;top:234px;width:34.5px;height:34.5px"></div>
<svg class="a" style="left:36.3px;top:234px;overflow:visible" width="35" height="34" viewBox="0 0 35 34"><path d="M7.3 25.2 L14.4 11" stroke="#111" stroke-width="1.2" fill="none"/><circle cx="21" cy="15.4" r="7" stroke="#111" stroke-width="1.2" fill="none"/><circle cx="14.4" cy="11" r="1.9" fill="#f01414"/></svg>
<div class="btn" style="left:1.2px;top:268.5px;width:34.5px;height:34.69999999999999px"></div>
<svg class="a" style="left:1.2px;top:268.5px;overflow:visible" width="35" height="35" viewBox="0 0 35 35"><path d="M5 18.7 L27.2 7.4" stroke="#111" stroke-width="1.2" fill="none"/><path d="M12.7 31 Q14 19 27.2 16.3" stroke="#111" stroke-width="1.2" fill="none"/><circle cx="16.3" cy="12.8" r="1.9" fill="#f01414"/><circle cx="26.6" cy="27.2" r="1.9" fill="#f01414"/></svg>
<div class="btn" style="left:36.3px;top:268.5px;width:34.5px;height:34.69999999999999px"></div>
<svg class="a" style="left:36.3px;top:268.5px;overflow:visible" width="35" height="35" viewBox="0 0 35 35"><circle cx="16.2" cy="17.3" r="9.8" stroke="#111" stroke-width="1.2" fill="none"/><circle cx="16.2" cy="17.3" r="1.9" fill="#f01414"/><circle cx="16.2" cy="7.5" r="1.9" fill="#f01414"/><circle cx="16.2" cy="27.1" r="1.9" fill="#f01414"/><circle cx="6.4" cy="17.3" r="1.9" fill="#f01414"/><circle cx="26" cy="17.3" r="1.9" fill="#f01414"/></svg>
<div class="btn" style="left:1.2px;top:313px;width:34.5px;height:33px"></div>
<svg class="a" style="left:1.2px;top:313px;overflow:visible" width="35" height="33" viewBox="0 0 35 33"><path d="M5 16 L27.2 5.5" stroke="#111" stroke-width="1.2" fill="none"/><path d="M12 28 Q12 17 27.2 14" stroke="#111" stroke-width="1.2" fill="none"/><circle cx="16.3" cy="10.8" r="1.9" fill="#f01414"/><circle cx="18" cy="15.5" r="1.9" fill="#f01414"/></svg>
<div class="btn" style="left:36.3px;top:313px;width:34.5px;height:33px"></div>
<svg class="a" style="left:36.3px;top:313px;overflow:visible" width="35" height="33" viewBox="0 0 35 33"><rect x="4.5" y="7" width="24" height="18" fill="none" stroke="#222" stroke-width="1.6"/><path d="M6 24 L27 8" stroke="#777" stroke-width="0.8" stroke-dasharray="1.5 1"/><circle cx="16.5" cy="16" r="1.9" fill="#f01414"/></svg>
<div class="btn" style="left:1.2px;top:356px;width:34.5px;height:33px"></div>
<svg class="a" style="left:1.2px;top:356px;overflow:visible" width="35" height="33" viewBox="0 0 35 33"><path d="M7 15 L27 6 M11 23 Q13 16 27 13" stroke="#111" stroke-width="1.2" fill="none"/><path d="M5 12 l4 -1 l-1 3 z M18 28 l1 -4 l2 3z" fill="#111"/><circle cx="14.5" cy="12" r="1.9" fill="#f01414"/><circle cx="16" cy="17.5" r="1.9" fill="#f01414"/></svg>
<div class="btn" style="left:36.3px;top:356px;width:34.5px;height:33px"></div>
<svg class="a" style="left:36.3px;top:356px;overflow:visible" width="35" height="33" viewBox="0 0 35 33"><path d="M8 13.5 L27.3 5" stroke="#111" stroke-width="1" stroke-dasharray="2.2 1.6"/><path d="M3.5 13 l5 -2.5 l-1.2 3.6 z M3.5 17.5 l5 -2.5 l-1.2 3.6 z" fill="#111"/><circle cx="12.2" cy="11.8" r="1.9" fill="#f01414"/><circle cx="27.3" cy="5" r="1.5" fill="#111"/><text x="3.8" y="28.6" font-size="12.5" font-family="Liberation Sans" fill="#111">1</text><text x="23.6" y="18.8" font-size="12.5" font-family="Liberation Sans" fill="#111">2</text></svg>
<div class="btn" style="left:1.2px;top:398.8px;width:34.5px;height:33.69999999999999px"></div>
<svg class="a" style="left:1.2px;top:398.8px;overflow:visible" width="35" height="34" viewBox="0 0 35 34"><path d="M4.6 13.4 L28.8 21 M23 3.9 L17.3 28.1" stroke="#111" stroke-width="1.2" fill="none"/><circle cx="20" cy="18.3" r="1.9" fill="#f01414"/></svg>
<div class="btn" style="left:36.3px;top:398.8px;width:34.5px;height:33.69999999999999px"></div>
<svg class="a" style="left:36.3px;top:398.8px;overflow:visible" width="35" height="34" viewBox="0 0 35 34"><path d="M6.9 17.9 L16.7 21.8 M26.1 7.7 L24 18" stroke="#111" stroke-width="1.2" fill="none"/><circle cx="22.5" cy="22.5" r="1.9" fill="#f01414"/></svg>
<div class="btn" style="left:1.2px;top:441.3px;width:34.5px;height:34.19999999999999px"></div>
<svg class="a" style="left:1.2px;top:441.3px;overflow:visible" width="35" height="34" viewBox="0 0 35 34"><text x="16.9" y="21.2" text-anchor="middle" font-size="11.8" font-family="Liberation Sans" fill="#1a1a1a">Auto</text></svg>
<div class="btn" style="left:1.2px;top:484.2px;width:34.5px;height:34.099999999999966px"></div>
<svg class="a" style="left:1.2px;top:484.2px;overflow:visible" width="35" height="34" viewBox="0 0 35 34"><path d="M13.2 5.6 L13.2 20.8 L29.1 20.8" fill="none" stroke="#444" stroke-width="1.1"/><text x="5" y="14" font-size="11" font-family="Liberation Sans" fill="#111">y</text><text x="22.5" y="30" font-size="11" font-family="Liberation Sans" fill="#111">x</text><circle cx="26.8" cy="6.8" r="1.6" fill="#f01414"/></svg>
<div class="btn" style="left:36.3px;top:484.2px;width:34.5px;height:34.099999999999966px"></div>
<svg class="a" style="left:36.3px;top:484.2px;overflow:visible" width="35" height="34" viewBox="0 0 35 34"><path d="M4.6 26 L21.3 9.1 Q28.5 15 28.9 26 Z" fill="none" stroke="#222" stroke-width="1.1"/><text x="7.2" y="16.2" font-size="10.5" font-family="Liberation Sans" fill="#111">r</text><text x="17.6" y="23.2" font-size="11" font-family="Liberation Sans" fill="#111">α</text><circle cx="21.3" cy="9.1" r="1.7" fill="#f01414"/></svg>
<div class="btn" style="left:1.2px;top:527.5px;width:34.5px;height:33.700000000000045px"></div>
<svg class="a" style="left:1.2px;top:527.5px;overflow:visible" width="35" height="34" viewBox="0 0 35 34"><path d="M8.6 8 L24.9 8 M8.6 8 L8.6 24.4" stroke="#bbb" stroke-width="0.8" fill="none"/><circle cx="8.6" cy="8" r="2.1" fill="#f01414"/><circle cx="24.9" cy="8" r="1.3" fill="#111"/><circle cx="8.6" cy="24.4" r="1.3" fill="#111"/><text x="22.3" y="19.3" font-size="11" font-family="Liberation Sans" fill="#111">2</text><text x="12" y="27.6" font-size="11" font-family="Liberation Sans" fill="#111">1</text></svg>
<div class="btn" style="left:36.3px;top:527.5px;width:34.5px;height:33.700000000000045px"></div>
<svg class="a" style="left:36.3px;top:527.5px;overflow:visible" width="35" height="34" viewBox="0 0 35 34"><path d="M7.9 24.4 L24.3 24.4 L24.3 8" stroke="#bbb" stroke-width="0.8" fill="none"/><circle cx="24.3" cy="24.4" r="2.1" fill="#f01414"/><circle cx="24.3" cy="8" r="1.3" fill="#111"/><circle cx="7.9" cy="24.4" r="1.3" fill="#111"/><text x="17" y="13.9" font-size="11" font-family="Liberation Sans" fill="#111">2</text><text x="6.5" y="19.8" font-size="11" font-family="Liberation Sans" fill="#111">1</text></svg>
<div class="btn" style="left:1.2px;top:570.6px;width:34.5px;height:34.19999999999993px"></div>
<svg class="a" style="left:1.2px;top:570.6px;overflow:visible" width="35" height="34" viewBox="0 0 35 34"><path d="M8 12 Q8 6 14 6 L21 6 Q26 6 26 12 L26 25 L17 25 L17 28 L13 25 L8 25 Z" fill="none" stroke="#f2a0a0" stroke-width="1"/><circle cx="14.5" cy="14" r="4" fill="none" stroke="#f08080" stroke-width="1"/><path d="M19 21 L26 14 L26 21 Z" fill="none" stroke="#f08080" stroke-width="1"/><circle cx="17.5" cy="16.5" r="1.6" fill="#f01414"/></svg>
<div class="btnp" style="left:1.2px;top:613.8px;width:34.5px;height:33.200000000000045px"></div>
<svg class="a" style="left:1.2px;top:613.8px;overflow:visible" width="35" height="33" viewBox="0 0 35 33"><path d="M14 16.5 h6 M17 13.5 v6" stroke="#333" stroke-width="1"/></svg>
<div class="btn" style="left:36.3px;top:613.8px;width:34.5px;height:33.200000000000045px"></div>
<svg class="a" style="left:36.3px;top:613.8px;overflow:visible" width="35" height="33" viewBox="0 0 35 33"><path d="M4.5 16.5 h27 M17.5 4 v26" stroke="#111" stroke-width="1.1"/><circle cx="17.5" cy="16.5" r="3.6" fill="none" stroke="#f01414" stroke-width="1.1"/><path d="M13.9 16.5 h7.2 M17.5 12.9 v7.2" stroke="#f01414" stroke-width="0.9"/></svg>
<div class="btn" style="left:1.2px;top:647px;width:34.5px;height:34.60000000000002px"></div>
<svg class="a" style="left:1.2px;top:647px;overflow:visible" width="35" height="35" viewBox="0 0 35 35"><path d="M4.5 16.5 h27" stroke="#111" stroke-width="1.1"/><circle cx="17.5" cy="16.5" r="3.6" fill="none" stroke="#f01414" stroke-width="1.1"/><path d="M13.9 16.5 h7.2 M17.5 12.9 v7.2" stroke="#f01414" stroke-width="0.9"/></svg>
<div class="btn" style="left:36.3px;top:647px;width:34.5px;height:34.60000000000002px"></div>
<svg class="a" style="left:36.3px;top:647px;overflow:visible" width="35" height="35" viewBox="0 0 35 35"><path d="M17.5 4 v26" stroke="#111" stroke-width="1.1"/><circle cx="17.5" cy="16.5" r="3.6" fill="none" stroke="#f01414" stroke-width="1.1"/><path d="M13.9 16.5 h7.2 M17.5 12.9 v7.2" stroke="#f01414" stroke-width="0.9"/></svg>
<div class="btn" style="left:1.2px;top:683.4px;width:34.5px;height:34.200000000000045px"></div>
<svg class="a" style="left:1.2px;top:683.4px;overflow:visible" width="35" height="34" viewBox="0 0 35 34"><path d="M7 25 L26 14" stroke="#111" stroke-width="1.1"/><g stroke="#666" stroke-width="0.8"><path d="M26.9 23.3 L29.9 23.0"/><path d="M26.1 19.2 L29.0 18.3"/><path d="M24.5 15.3 L27.1 13.8"/><path d="M22.1 11.9 L24.4 9.9"/><path d="M19.0 9.0 L20.8 6.6"/><path d="M15.5 6.9 L16.7 4.2"/><path d="M11.5 5.5 L12.2 2.6"/><path d="M7.3 5.0 L7.4 2.0"/></g><circle cx="7" cy="25" r="3.4" fill="none" stroke="#f01414" stroke-width="1.1"/><path d="M3.6 25 h6.8 M7 21.6 v6.8" stroke="#f01414" stroke-width="0.9"/></svg>
<div class="btn" style="left:1.2px;top:726.6px;width:34.5px;height:34.19999999999993px"></div>
<svg class="a" style="left:1.2px;top:726.6px;overflow:visible" width="35" height="34" viewBox="0 0 35 34"><circle cx="13.5" cy="8" r="3.4" fill="none" stroke="#f01414" stroke-width="1.1"/><path d="M10.1 8 h6.8 M13.5 4.6 v6.8" stroke="#f01414" stroke-width="0.9"/><path d="M14 11 L14 25 L17.5 22 L20 28 L22 27 L19.5 21.5 L24 21.5 Z" fill="#fff" stroke="#333" stroke-width="0.9"/></svg>
<div class="btn" style="left:36.3px;top:726.6px;width:34.5px;height:34.19999999999993px"></div>
<svg class="a" style="left:36.3px;top:726.6px;overflow:visible" width="35" height="34" viewBox="0 0 35 34"><g transform="translate(7.5,7)"><ellipse cx="3.5" cy="4" rx="3" ry="4" fill="none" stroke="#111" stroke-width="1.6"/><path d="M6.5 4 h12 M13 4 v3.5 M16 4 v3.5 M18.5 4 v3" stroke="#111" stroke-width="2.2"/></g><circle cx="18" cy="22.5" r="3.4" fill="none" stroke="#f01414" stroke-width="1.1"/><path d="M14.6 22.5 h6.8 M18 19.1 v6.8" stroke="#f01414" stroke-width="0.9"/></svg>
<div class="btn" style="left:1.2px;top:769.5px;width:34.5px;height:30.5px"></div>
<svg class="a" style="left:1.2px;top:769.5px;overflow:visible" width="35" height="30" viewBox="0 0 35 30"><g transform="translate(8,12)"><ellipse cx="3.5" cy="4" rx="3" ry="4" fill="none" stroke="#111" stroke-width="1.6"/><path d="M6.5 4 h12 M13 4 v3.5 M16 4 v3.5 M18.5 4 v3" stroke="#111" stroke-width="2.2"/></g></svg>
<div class="a" style="left:72px;top:107px;width:1083px;height:25px;background:#d5d5d5;border-top:1px solid #c6c6c6"></div>
<svg class="a" style="left:94px;top:111px;" width="18" height="18" viewBox="0 0 18 18"><circle cx="8" cy="7.8" r="5.3" fill="#f4f4f4" stroke="#253c86" stroke-width="2.6"/><path d="M6 4.5 v6 M4 8 h3" stroke="#999" stroke-width="0.6"/><path d="M8.5 5 l1.5 2 M5 9.5 h3" stroke="#e07070" stroke-width="0.6"/><path d="M9 8.5 L13.2 12.8" stroke="#f2a010" stroke-width="2.2"/><circle cx="13.8" cy="13.4" r="1.2" fill="#e06060"/></svg>
<div class="a" style="left:572px;top:113px;width:122px;text-align:center;font-size:12px;color:#222">back_plate.dxf</div>
<div class="a" style="left:72px;top:132px;width:1083px;height:23px;background:#ececec"></div>
<div class="a" style="left:72px;top:155px;width:23px;height:577px;background:#ececec"></div>
<svg class="a" style="left:95px;top:132px" width="1043" height="23"><rect x="0" y="22" width="1043" height="1" fill="#fff"/><path d="M0.5 20 v4" stroke="#777" stroke-width="1"/><path d="M10.5 16 v7.5" stroke="#777" stroke-width="1"/><text transform="translate(10.58 10) scale(0.81 1)" text-anchor="middle" font-size="10.1" font-family="Liberation Sans" fill="#1a1a1a">−4</text><path d="M20.5 20 v4" stroke="#777" stroke-width="1"/><path d="M31.5 16 v7.5" stroke="#777" stroke-width="1"/><text transform="translate(31.08 10) scale(0.81 1)" text-anchor="middle" font-size="10.1" font-family="Liberation Sans" fill="#1a1a1a">−2</text><path d="M41.5 20 v4" stroke="#777" stroke-width="1"/><path d="M51.5 16 v7.5" stroke="#777" stroke-width="1"/><text transform="translate(51.58 10) scale(0.81 1)" text-anchor="middle" font-size="10.1" font-family="Liberation Sans" fill="#1a1a1a">0</text><path d="M61.5 20 v4" stroke="#777" stroke-width="1"/><path d="M72.5 16 v7.5" stroke="#777" stroke-width="1"/><text transform="translate(72.08 10) scale(0.81 1)" text-anchor="middle" font-size="10.1" font-family="Liberation Sans" fill="#1a1a1a">2</text><path d="M82.5 20 v4" stroke="#777" stroke-width="1"/><path d="M92.5 16 v7.5" stroke="#777" stroke-width="1"/><text transform="translate(92.58 10) scale(0.81 1)" text-anchor="middle" font-size="10.1" font-family="Liberation Sans" fill="#1a1a1a">4</text><path d="M102.5 20 v4" stroke="#777" stroke-width="1"/><path d="M113.5 16 v7.5" stroke="#777" stroke-width="1"/><text transform="translate(113.08 10) scale(0.81 1)" text-anchor="middle" font-size="10.1" font-family="Liberation Sans" fill="#1a1a1a">6</text><path d="M123.5 20 v4" stroke="#777" stroke-width="1"/><path d="M133.5 16 v7.5" stroke="#777" stroke-width="1"/><text transform="translate(133.58 10) scale(0.81 1)" text-anchor="middle" font-size="10.1" font-family="Liberation Sans" fill="#1a1a1a">8</text><path d="M143.5 20 v4" stroke="#777" stroke-width="1"/><path d="M154.5 16 v7.5" stroke="#777" stroke-width="1"/><text transform="translate(154.08 10) scale(0.81 1)" text-anchor="middle" font-size="10.1" font-family="Liberation Sans" fill="#1a1a1a">10</text><path d="M164.5 20 v4" stroke="#777" stroke-width="1"/><path d="M174.5 16 v7.5" stroke="#777" stroke-width="1"/><text transform="translate(174.58 10) scale(0.81 1)" text-anchor="middle" font-size="10.1" font-family="Liberation Sans" fill="#1a1a1a">12</text><path d="M184.5 20 v4" stroke="#777" stroke-width="1"/><path d="M195.5 16 v7.5" stroke="#777" stroke-width="1"/><text transform="translate(195.08 10) scale(0.81 1)" text-anchor="middle" font-size="10.1" font-family="Liberation Sans" fill="#1a1a1a">14</text><path d="M205.5 20 v4" stroke="#777" stroke-width="1"/><path d="M215.5 16 v7.5" stroke="#777" stroke-width="1"/><text transform="translate(215.58 10) scale(0.81 1)" text-anchor="middle" font-size="10.1" font-family="Liberation Sans" fill="#1a1a1a">16</text><path d="M225.5 20 v4" stroke="#777" stroke-width="1"/><path d="M236.5 16 v7.5" stroke="#777" stroke-width="1"/><text transform="translate(236.08 10) scale(0.81 1)" text-anchor="middle" font-size="10.1" font-family="Liberation Sans" fill="#1a1a1a">18</text><path d="M246.5 20 v4" stroke="#777" stroke-width="1"/><path d="M256.5 16 v7.5" stroke="#777" stroke-width="1"/><text transform="translate(256.58 10) scale(0.81 1)" text-anchor="middle" font-size="10.1" font-family="Liberation Sans" fill="#1a1a1a">20</text><path d="M266.5 20 v4" stroke="#777" stroke-width="1"/><path d="M277.5 16 v7.5" stroke="#777" stroke-width="1"/><text transform="translate(277.08 10) scale(0.81 1)" text-anchor="middle" font-size="10.1" font-family="Liberation Sans" fill="#1a1a1a">22</text><path d="M287.5 20 v4" stroke="#777" stroke-width="1"/><path d="M297.5 16 v7.5" stroke="#777" stroke-width="1"/><text transform="translate(297.58 10) scale(0.81 1)" text-anchor="middle" font-size="10.1" font-family="Liberation Sans" fill="#1a1a1a">24</text><path d="M307.5 20 v4" stroke="#777" stroke-width="1"/><path d="M318.5 16 v7.5" stroke="#777" stroke-width="1"/><text transform="translate(318.08 10) scale(0.81 1)" text-anchor="middle" font-size="10.1" font-family="Liberation Sans" fill="#1a1a1a">26</text><path d="M328.5 20 v4" stroke="#777" stroke-width="1"/><path d="M338.5 16 v7.5" stroke="#777" stroke-width="1"/><text transform="translate(338.58 10) scale(0.81 1)" text-anchor="middle" font-size="10.1" font-family="Liberation Sans" fill="#1a1a1a">28</text><path d="M348.5 20 v4" stroke="#777" stroke-width="1"/><path d="M359.5 16 v7.5" stroke="#777" stroke-width="1"/><text transform="translate(359.08 10) scale(0.81 1)" text-anchor="middle" font-size="10.1" font-family="Liberation Sans" fill="#1a1a1a">30</text><path d="M369.5 20 v4" stroke="#777" stroke-width="1"/><path d="M379.5 16 v7.5" stroke="#777" stroke-width="1"/><text transform="translate(379.58 10) scale(0.81 1)" text-anchor="middle" font-size="10.1" font-family="Liberation Sans" fill="#1a1a1a">32</text><path d="M389.5 20 v4" stroke="#777" stroke-width="1"/><path d="M400.5 16 v7.5" stroke="#777" stroke-width="1"/><text transform="translate(400.08 10) scale(0.81 1)" text-anchor="middle" font-size="10.1" font-family="Liberation Sans" fill="#1a1a1a">34</text><path d="M410.5 20 v4" stroke="#777" stroke-width="1"/><path d="M420.5 16 v7.5" stroke="#777" stroke-width="1"/><text transform="translate(420.58 10) scale(0.81 1)" text-anchor="middle" font-size="10.1" font-family="Liberation Sans" fill="#1a1a1a">36</text><path d="M430.5 20 v4" stroke="#777" stroke-width="1"/><path d="M441.5 16 v7.5" stroke="#777" stroke-width="1"/><text transform="translate(441.08 10) scale(0.81 1)" text-anchor="middle" font-size="10.1" font-family="Liberation Sans" fill="#1a1a1a">38</text><path d="M451.5 20 v4" stroke="#777" stroke-width="1"/><path d="M461.5 16 v7.5" stroke="#777" stroke-width="1"/><text transform="translate(461.58 10) scale(0.81 1)" text-anchor="middle" font-size="10.1" font-family="Liberation Sans" fill="#1a1a1a">40</text><path d="M471.5 20 v4" stroke="#777" stroke-width="1"/><path d="M482.5 16 v7.5" stroke="#777" stroke-width="1"/><text transform="translate(482.08 10) scale(0.81 1)" text-anchor="middle" font-size="10.1" font-family="Liberation Sans" fill="#1a1a1a">42</text><path d="M492.5 20 v4" stroke="#777" stroke-width="1"/><path d="M502.5 16 v7.5" stroke="#777" stroke-width="1"/><text transform="translate(502.58 10) scale(0.81 1)" text-anchor="middle" font-size="10.1" font-family="Liberation Sans" fill="#1a1a1a">44</text><path d="M512.5 20 v4" stroke="#777" stroke-width="1"/><path d="M523.5 16 v7.5" stroke="#777" stroke-width="1"/><text transform="translate(523.08 10) scale(0.81 1)" text-anchor="middle" font-size="10.1" font-family="Liberation Sans" fill="#1a1a1a">46</text><path d="M533.5 20 v4" stroke="#777" stroke-width="1"/><path d="M543.5 16 v7.5" stroke="#777" stroke-width="1"/><text transform="translate(543.58 10) scale(0.81 1)" text-anchor="middle" font-size="10.1" font-family="Liberation Sans" fill="#1a1a1a">48</text><path d="M553.5 20 v4" stroke="#777" stroke-width="1"/><path d="M564.5 16 v7.5" stroke="#777" stroke-width="1"/><text transform="translate(564.08 10) scale(0.81 1)" text-anchor="middle" font-size="10.1" font-family="Liberation Sans" fill="#1a1a1a">50</text><path d="M574.5 20 v4" stroke="#777" stroke-width="1"/><path d="M584.5 16 v7.5" stroke="#777" stroke-width="1"/><text transform="translate(584.58 10) scale(0.81 1)" text-anchor="middle" font-size="10.1" font-family="Liberation Sans" fill="#1a1a1a">52</text><path d="M594.5 20 v4" stroke="#777" stroke-width="1"/><path d="M605.5 16 v7.5" stroke="#777" stroke-width="1"/><text transform="translate(605.08 10) scale(0.81 1)" text-anchor="middle" font-size="10.1" font-family="Liberation Sans" fill="#1a1a1a">54</text><path d="M615.5 20 v4" stroke="#777" stroke-width="1"/><path d="M625.5 16 v7.5" stroke="#777" stroke-width="1"/><text transform="translate(625.58 10) scale(0.81 1)" text-anchor="middle" font-size="10.1" font-family="Liberation Sans" fill="#1a1a1a">56</text><path d="M635.5 20 v4" stroke="#777" stroke-width="1"/><path d="M646.5 16 v7.5" stroke="#777" stroke-width="1"/><text transform="translate(646.08 10) scale(0.81 1)" text-anchor="middle" font-size="10.1" font-family="Liberation Sans" fill="#1a1a1a">58</text><path d="M656.5 20 v4" stroke="#777" stroke-width="1"/><path d="M666.5 16 v7.5" stroke="#777" stroke-width="1"/><text transform="translate(666.58 10) scale(0.81 1)" text-anchor="middle" font-size="10.1" font-family="Liberation Sans" fill="#1a1a1a">60</text><path d="M676.5 20 v4" stroke="#777" stroke-width="1"/><path d="M687.5 16 v7.5" stroke="#777" stroke-width="1"/><text transform="translate(687.08 10) scale(0.81 1)" text-anchor="middle" font-size="10.1" font-family="Liberation Sans" fill="#1a1a1a">62</text><path d="M697.5 20 v4" stroke="#777" stroke-width="1"/><path d="M707.5 16 v7.5" stroke="#777" stroke-width="1"/><text transform="translate(707.58 10) scale(0.81 1)" text-anchor="middle" font-size="10.1" font-family="Liberation Sans" fill="#1a1a1a">64</text><path d="M717.5 20 v4" stroke="#777" stroke-width="1"/><path d="M728.5 16 v7.5" stroke="#777" stroke-width="1"/><text transform="translate(728.08 10) scale(0.81 1)" text-anchor="middle" font-size="10.1" font-family="Liberation Sans" fill="#1a1a1a">66</text><path d="M738.5 20 v4" stroke="#777" stroke-width="1"/><path d="M748.5 16 v7.5" stroke="#777" stroke-width="1"/><text transform="translate(748.58 10) scale(0.81 1)" text-anchor="middle" font-size="10.1" font-family="Liberation Sans" fill="#1a1a1a">68</text><path d="M758.5 20 v4" stroke="#777" stroke-width="1"/><path d="M769.5 16 v7.5" stroke="#777" stroke-width="1"/><text transform="translate(769.08 10) scale(0.81 1)" text-anchor="middle" font-size="10.1" font-family="Liberation Sans" fill="#1a1a1a">70</text><path d="M779.5 20 v4" stroke="#777" stroke-width="1"/><path d="M789.5 16 v7.5" stroke="#777" stroke-width="1"/><text transform="translate(789.58 10) scale(0.81 1)" text-anchor="middle" font-size="10.1" font-family="Liberation Sans" fill="#1a1a1a">72</text><path d="M799.5 20 v4" stroke="#777" stroke-width="1"/><path d="M810.5 16 v7.5" stroke="#777" stroke-width="1"/><text transform="translate(810.08 10) scale(0.81 1)" text-anchor="middle" font-size="10.1" font-family="Liberation Sans" fill="#1a1a1a">74</text><path d="M820.5 20 v4" stroke="#777" stroke-width="1"/><path d="M830.5 16 v7.5" stroke="#777" stroke-width="1"/><text transform="translate(830.58 10) scale(0.81 1)" text-anchor="middle" font-size="10.1" font-family="Liberation Sans" fill="#1a1a1a">76</text><path d="M840.5 20 v4" stroke="#777" stroke-width="1"/><path d="M851.5 16 v7.5" stroke="#777" stroke-width="1"/><text transform="translate(851.08 10) scale(0.81 1)" text-anchor="middle" font-size="10.1" font-family="Liberation Sans" fill="#1a1a1a">78</text><path d="M861.5 20 v4" stroke="#777" stroke-width="1"/><path d="M871.5 16 v7.5" stroke="#777" stroke-width="1"/><text transform="translate(871.58 10) scale(0.81 1)" text-anchor="middle" font-size="10.1" font-family="Liberation Sans" fill="#1a1a1a">80</text><path d="M881.5 20 v4" stroke="#777" stroke-width="1"/><path d="M892.5 16 v7.5" stroke="#777" stroke-width="1"/><text transform="translate(892.08 10) scale(0.81 1)" text-anchor="middle" font-size="10.1" font-family="Liberation Sans" fill="#1a1a1a">82</text><path d="M902.5 20 v4" stroke="#777" stroke-width="1"/><path d="M912.5 16 v7.5" stroke="#777" stroke-width="1"/><text transform="translate(912.58 10) scale(0.81 1)" text-anchor="middle" font-size="10.1" font-family="Liberation Sans" fill="#1a1a1a">84</text><path d="M922.5 20 v4" stroke="#777" stroke-width="1"/><path d="M933.5 16 v7.5" stroke="#777" stroke-width="1"/><text transform="translate(933.08 10) scale(0.81 1)" text-anchor="middle" font-size="10.1" font-family="Liberation Sans" fill="#1a1a1a">86</text><path d="M943.5 20 v4" stroke="#777" stroke-width="1"/><path d="M953.5 16 v7.5" stroke="#777" stroke-width="1"/><text transform="translate(953.58 10) scale(0.81 1)" text-anchor="middle" font-size="10.1" font-family="Liberation Sans" fill="#1a1a1a">88</text><path d="M963.5 20 v4" stroke="#777" stroke-width="1"/><path d="M974.5 16 v7.5" stroke="#777" stroke-width="1"/><text transform="translate(974.08 10) scale(0.81 1)" text-anchor="middle" font-size="10.1" font-family="Liberation Sans" fill="#1a1a1a">90</text><path d="M984.5 20 v4" stroke="#777" stroke-width="1"/><path d="M994.5 16 v7.5" stroke="#777" stroke-width="1"/><text transform="translate(994.58 10) scale(0.81 1)" text-anchor="middle" font-size="10.1" font-family="Liberation Sans" fill="#1a1a1a">92</text><path d="M1004.5 20 v4" stroke="#777" stroke-width="1"/><path d="M1015.5 16 v7.5" stroke="#777" stroke-width="1"/><text transform="translate(1015.08 10) scale(0.81 1)" text-anchor="middle" font-size="10.1" font-family="Liberation Sans" fill="#1a1a1a">94</text><path d="M1025.5 20 v4" stroke="#777" stroke-width="1"/><path d="M1035.5 16 v7.5" stroke="#777" stroke-width="1"/><text transform="translate(1035.58 10) scale(0.81 1)" text-anchor="middle" font-size="10.1" font-family="Liberation Sans" fill="#1a1a1a">96</text></svg>
<svg class="a" style="left:72px;top:155px" width="23" height="577"><rect x="22" y="0" width="1" height="577" fill="#fff"/><path d="M20 587.5 h4" stroke="#777" stroke-width="1"/><path d="M15.5 577.5 h8" stroke="#777" stroke-width="1"/><text x="0" y="0" transform="translate(10 577.30) rotate(-90) scale(0.81 1)" text-anchor="middle" font-size="10.1" font-family="Liberation Sans" fill="#222">0</text><path d="M20 567.5 h4" stroke="#777" stroke-width="1"/><path d="M15.5 556.5 h8" stroke="#777" stroke-width="1"/><text x="0" y="0" transform="translate(10 556.80) rotate(-90) scale(0.81 1)" text-anchor="middle" font-size="10.1" font-family="Liberation Sans" fill="#222">−8</text><path d="M20 546.5 h4" stroke="#777" stroke-width="1"/><path d="M15.5 536.5 h8" stroke="#777" stroke-width="1"/><text x="0" y="0" transform="translate(10 536.30) rotate(-90) scale(0.81 1)" text-anchor="middle" font-size="10.1" font-family="Liberation Sans" fill="#222">−6</text><path d="M20 526.5 h4" stroke="#777" stroke-width="1"/><path d="M15.5 515.5 h8" stroke="#777" stroke-width="1"/><text x="0" y="0" transform="translate(10 515.80) rotate(-90) scale(0.81 1)" text-anchor="middle" font-size="10.1" font-family="Liberation Sans" fill="#222">−4</text><path d="M20 505.5 h4" stroke="#777" stroke-width="1"/><path d="M15.5 495.5 h8" stroke="#777" stroke-width="1"/><text x="0" y="0" transform="translate(10 495.30) rotate(-90) scale(0.81 1)" text-anchor="middle" font-size="10.1" font-family="Liberation Sans" fill="#222">−2</text><path d="M20 485.5 h4" stroke="#777" stroke-width="1"/><path d="M15.5 474.5 h8" stroke="#777" stroke-width="1"/><text x="0" y="0" transform="translate(10 474.80) rotate(-90) scale(0.81 1)" text-anchor="middle" font-size="10.1" font-family="Liberation Sans" fill="#222">0</text><path d="M20 464.5 h4" stroke="#777" stroke-width="1"/><path d="M15.5 454.5 h8" stroke="#777" stroke-width="1"/><text x="0" y="0" transform="translate(10 454.30) rotate(-90) scale(0.81 1)" text-anchor="middle" font-size="10.1" font-family="Liberation Sans" fill="#222">2</text><path d="M20 444.5 h4" stroke="#777" stroke-width="1"/><path d="M15.5 433.5 h8" stroke="#777" stroke-width="1"/><text x="0" y="0" transform="translate(10 433.80) rotate(-90) scale(0.81 1)" text-anchor="middle" font-size="10.1" font-family="Liberation Sans" fill="#222">4</text><path d="M20 423.5 h4" stroke="#777" stroke-width="1"/><path d="M15.5 413.5 h8" stroke="#777" stroke-width="1"/><text x="0" y="0" transform="translate(10 413.30) rotate(-90) scale(0.81 1)" text-anchor="middle" font-size="10.1" font-family="Liberation Sans" fill="#222">6</text><path d="M20 403.5 h4" stroke="#777" stroke-width="1"/><path d="M15.5 392.5 h8" stroke="#777" stroke-width="1"/><text x="0" y="0" transform="translate(10 392.80) rotate(-90) scale(0.81 1)" text-anchor="middle" font-size="10.1" font-family="Liberation Sans" fill="#222">8</text><path d="M20 382.5 h4" stroke="#777" stroke-width="1"/><path d="M15.5 372.5 h8" stroke="#777" stroke-width="1"/><text x="0" y="0" transform="translate(10 372.30) rotate(-90) scale(0.81 1)" text-anchor="middle" font-size="10.1" font-family="Liberation Sans" fill="#222">10</text><path d="M20 362.5 h4" stroke="#777" stroke-width="1"/><path d="M15.5 351.5 h8" stroke="#777" stroke-width="1"/><text x="0" y="0" transform="translate(10 351.80) rotate(-90) scale(0.81 1)" text-anchor="middle" font-size="10.1" font-family="Liberation Sans" fill="#222">12</text><path d="M20 341.5 h4" stroke="#777" stroke-width="1"/><path d="M15.5 331.5 h8" stroke="#777" stroke-width="1"/><text x="0" y="0" transform="translate(10 331.30) rotate(-90) scale(0.81 1)" text-anchor="middle" font-size="10.1" font-family="Liberation Sans" fill="#222">14</text><path d="M20 321.5 h4" stroke="#777" stroke-width="1"/><path d="M15.5 310.5 h8" stroke="#777" stroke-width="1"/><text x="0" y="0" transform="translate(10 310.80) rotate(-90) scale(0.81 1)" text-anchor="middle" font-size="10.1" font-family="Liberation Sans" fill="#222">16</text><path d="M20 300.5 h4" stroke="#777" stroke-width="1"/><path d="M15.5 290.5 h8" stroke="#777" stroke-width="1"/><text x="0" y="0" transform="translate(10 290.30) rotate(-90) scale(0.81 1)" text-anchor="middle" font-size="10.1" font-family="Liberation Sans" fill="#222">18</text><path d="M20 280.5 h4" stroke="#777" stroke-width="1"/><path d="M15.5 269.5 h8" stroke="#777" stroke-width="1"/><text x="0" y="0" transform="translate(10 269.80) rotate(-90) scale(0.81 1)" text-anchor="middle" font-size="10.1" font-family="Liberation Sans" fill="#222">20</text><path d="M20 259.5 h4" stroke="#777" stroke-width="1"/><path d="M15.5 249.5 h8" stroke="#777" stroke-width="1"/><text x="0" y="0" transform="translate(10 249.30) rotate(-90) scale(0.81 1)" text-anchor="middle" font-size="10.1" font-family="Liberation Sans" fill="#222">22</text><path d="M20 239.5 h4" stroke="#777" stroke-width="1"/><path d="M15.5 228.5 h8" stroke="#777" stroke-width="1"/><text x="0" y="0" transform="translate(10 228.80) rotate(-90) scale(0.81 1)" text-anchor="middle" font-size="10.1" font-family="Liberation Sans" fill="#222">24</text><path d="M20 218.5 h4" stroke="#777" stroke-width="1"/><path d="M15.5 208.5 h8" stroke="#777" stroke-width="1"/><text x="0" y="0" transform="translate(10 208.30) rotate(-90) scale(0.81 1)" text-anchor="middle" font-size="10.1" font-family="Liberation Sans" fill="#222">26</text><path d="M20 198.5 h4" stroke="#777" stroke-width="1"/><path d="M15.5 187.5 h8" stroke="#777" stroke-width="1"/><text x="0" y="0" transform="translate(10 187.80) rotate(-90) scale(0.81 1)" text-anchor="middle" font-size="10.1" font-family="Liberation Sans" fill="#222">28</text><path d="M20 177.5 h4" stroke="#777" stroke-width="1"/><path d="M15.5 167.5 h8" stroke="#777" stroke-width="1"/><text x="0" y="0" transform="translate(10 167.30) rotate(-90) scale(0.81 1)" text-anchor="middle" font-size="10.1" font-family="Liberation Sans" fill="#222">30</text><path d="M20 157.5 h4" stroke="#777" stroke-width="1"/><path d="M15.5 146.5 h8" stroke="#777" stroke-width="1"/><text x="0" y="0" transform="translate(10 146.80) rotate(-90) scale(0.81 1)" text-anchor="middle" font-size="10.1" font-family="Liberation Sans" fill="#222">32</text><path d="M20 136.5 h4" stroke="#777" stroke-width="1"/><path d="M15.5 126.5 h8" stroke="#777" stroke-width="1"/><text x="0" y="0" transform="translate(10 126.30) rotate(-90) scale(0.81 1)" text-anchor="middle" font-size="10.1" font-family="Liberation Sans" fill="#222">34</text><path d="M20 116.5 h4" stroke="#777" stroke-width="1"/><path d="M15.5 105.5 h8" stroke="#777" stroke-width="1"/><text x="0" y="0" transform="translate(10 105.80) rotate(-90) scale(0.81 1)" text-anchor="middle" font-size="10.1" font-family="Liberation Sans" fill="#222">36</text><path d="M20 95.5 h4" stroke="#777" stroke-width="1"/><path d="M15.5 85.5 h8" stroke="#777" stroke-width="1"/><text x="0" y="0" transform="translate(10 85.30) rotate(-90) scale(0.81 1)" text-anchor="middle" font-size="10.1" font-family="Liberation Sans" fill="#222">38</text><path d="M20 75.5 h4" stroke="#777" stroke-width="1"/><path d="M15.5 64.5 h8" stroke="#777" stroke-width="1"/><text x="0" y="0" transform="translate(10 64.80) rotate(-90) scale(0.81 1)" text-anchor="middle" font-size="10.1" font-family="Liberation Sans" fill="#222">40</text><path d="M20 54.5 h4" stroke="#777" stroke-width="1"/><path d="M15.5 44.5 h8" stroke="#777" stroke-width="1"/><text x="0" y="0" transform="translate(10 44.30) rotate(-90) scale(0.81 1)" text-anchor="middle" font-size="10.1" font-family="Liberation Sans" fill="#222">42</text><path d="M20 34.5 h4" stroke="#777" stroke-width="1"/><path d="M15.5 23.5 h8" stroke="#777" stroke-width="1"/><text x="0" y="0" transform="translate(10 23.80) rotate(-90) scale(0.81 1)" text-anchor="middle" font-size="10.1" font-family="Liberation Sans" fill="#222">44</text><path d="M20 13.5 h4" stroke="#777" stroke-width="1"/><path d="M15.5 3.5 h8" stroke="#777" stroke-width="1"/><text x="0" y="0" transform="translate(10 3.30) rotate(-90) scale(0.81 1)" text-anchor="middle" font-size="10.1" font-family="Liberation Sans" fill="#222">46</text><path d="M20 -6.5 h4" stroke="#777" stroke-width="1"/></svg>
<svg class="a" style="left:642px;top:144px;" width="14" height="10" viewBox="0 0 14 10"><path d="M0.8 1 L12.4 1 L6.6 7.2 Z" fill="#000"/></svg>
<svg class="a" style="left:84px;top:592px;" width="11" height="13" viewBox="0 0 11 13"><path d="M1.5 1.5 L8.5 6.5 L1.5 11.5 Z" fill="#000"/></svg>
<div class="a" style="left:1138px;top:132px;width:17px;height:616px;background:#f7f7f7"></div>
<div class="a" style="left:1143.3px;top:298.5px;width:7.6px;height:282.5px;background:#808080;border-radius:4px"></div>
<div class="a" style="left:72px;top:732px;width:1066px;height:16px;background:#f7f7f7"></div>
<div class="a" style="left:301px;top:736.7px;width:603.5px;height:8.3px;background:#808080;border-radius:4.5px"></div>
<div class="a" style="left:1098.5px;top:732.5px;width:56px;height:15px;background:#e6e6e6;text-align:right;font-size:12.3px;color:#111;line-height:15px;padding-right:1px">1 &lt; 10</div>
<div class="a" style="left:72px;top:748px;width:1083px;height:50px;background:#ececec"></div>
<div class="a" style="left:72px;top:748.5px;width:1082px;height:22px;background:#fff;border-top:2px solid #c2c2c2;border-bottom:1px solid #c8c8c8"></div>
<div class="a" style="left:77px;top:750px;font-size:13px;color:#1030d8"><i>Commande:</i> snapgrid</div>
<div class="a" style="left:72.7px;top:777px;font-size:13.4px;color:#111">Premier point :</div>
<div class="a" style="left:164px;top:776px;width:962px;height:18px;background:#fff"></div>
<div class="a" style="left:1127.5px;top:772.5px;width:25px;height:25px;background:linear-gradient(#f4f4f4,#e2e2e2);border:1px solid #b8b8b8"></div>
<svg class="a" style="left:1131px;top:777px;" width="18" height="15" viewBox="0 0 18 15"><rect x="1.5" y="1.5" width="14" height="11" fill="#fff" stroke="#111" stroke-width="1.2"/><rect x="1.5" y="1.5" width="14" height="3" fill="#111"/></svg>
<svg class="a" style="left:95px;top:155px;background:#000" width="1043" height="577" viewBox="0 0 1043 577"><path d="M51.5 0V577 M153.5 0V577 M256.5 0V577 M358.5 0V577 M461.5 0V577 M563.5 0V577 M666.5 0V577 M768.5 0V577 M871.5 0V577 M973.5 0V577 M0 474.5H1043 M0 372.5H1043 M0 269.5H1043 M0 167.5H1043 M0 64.5H1043" stroke="#1c1c1c" stroke-width="1" fill="none"/><path d="M0 567.5h1m9 0h1m9 0h1m10 0h1m9 0h1m9 0h1m9 0h1m10 0h1m9 0h1m9 0h1m9 0h1m10 0h1m9 0h1m9 0h1m9 0h1m10 0h1m9 0h1m9 0h1m9 0h1m10 0h1m9 0h1m9 0h1m9 0h1m10 0h1m9 0h1m9 0h1m9 0h1m10 0h1m9 0h1m9 0h1m9 0h1m10 0h1m9 0h1m9 0h1m9 0h1m10 0h1m9 0h1m9 0h1m9 0h1m10 0h1m9 0h1m9 0h1m9 0h1m10 0h1m9 0h1m9 0h1m9 0h1m10 0h1m9 0h1m9 0h1m9 0h1m10 0h1m9 0h1m9 0h1m9 0h1m10 0h1m9 0h1m9 0h1m9 0h1m10 0h1m9 0h1m9 0h1m9 0h1m10 0h1m9 0h1m9 0h1m9 0h1m10 0h1m9 0h1m9 0h1m9 0h1m10 0h1m9 0h1m9 0h1m9 0h1m10 0h1m9 0h1m9 0h1m9 0h1m10 0h1m9 0h1m9 0h1m9 0h1m10 0h1m9 0h1m9 0h1m9 0h1m10 0h1m9 0h1m9 0h1m9 0h1m10 0h1m9 0h1m9 0h1m9 0h1m10 0h1m9 0h1m9 0h1m9 0h1m10 0h1m9 0h1m9 0h1M0 556.5h1m9 0h1m9 0h1m10 0h1m9 0h1m9 0h1m9 0h1m10 0h1m9 0h1m9 0h1m9 0h1m10 0h1m9 0h1m9 0h1m9 0h1m10 0h1m9 0h1m9 0h1m9 0h1m10 0h1m9 0h1m9 0h1m9 0h1m10 0h1m9 0h1m9 0h1m9 0h1m10 0h1m9 0h1m9 0h1m9 0h1m10 0h1m9 0h1m9 0h1m9 0h1m10 0h1m9 0h1m9 0h1m9 0h1m10 0h1m9 0h1m9 0h1m9 0h1m10 0h1m9 0h1m9 0h1m9 0h1m10 0h1m9 0h1m9 0h1m9 0h1m10 0h1m9 0h1m9 0h1m9 0h1m10 0h1m9 0h1m9 0h1m9 0h1m10 0h1m9 0h1m9 0h1m9 0h1m10 0h1m9 0h1m9 0h1m9 0h1m10 0h1m9 0h1m9 0h1m9 0h1m10 0h1m9 0h1m9 0h1m9 0h1m10 0h1m9 0h1m9 0h1m9 0h1m10 0h1m9 0h1m9 0h1m9 0h1m10 0h1m9 0h1m9 0h1m9 0h1m10 0h1m9 0h1m9 0h1m9 0h1m10 0h1m9 0h1m9 0h1m9 0h1m10 0h1m9 0h1m9 0h1m9 0h1m10 0h1m9 0h1m9 0h1M0 546.5h1m9 0h1m9 0h1m10 0h1m9 0h1m9 0h1m9 0h1m10 0h1m9 0h1m9 0h1m9 0h1m10 0h1m9 0h1m9 0h1m9 0h1m10 0h1m9 0h1m9 0h1m9 0h1m10 0h1m9 0h1m9 0h1m9 0h1m10 0h1m9 0h1m9 0h1m9 0h1m10 0h1m9 0h1m9 0h1m9 0h1m10 0h1m9 0h1m9 0h1m9 0h1m10 0h1m9 0h1m9 0h1m9 0h1m10 0h1m9 0h1m9 0h1m9 0h1m10 0h1m9 0h1m9 0h1m9 0h1m10 0h1m9 0h1m9 0h1m9 0h1m10 0h1m9 0h1m9 0h1m9 0h1m10 0h1m9 0h1m9 0h1m9 0h1m10 0h1m9 0h1m9 0h1m9 0h1m10 0h1m9 0h1m9 0h1m9 0h1m10 0h1m9 0h1m9 0h1m9 0h1m10 0h1m9 0h1m9 0h1m9 0h1m10 0h1m9 0h1m9 0h1m9 0h1m10 0h1m9 0h1m9 0h1m9 0h1m10 0h1m9 0h1m9 0h1m9 0h1m10 0h1m9 0h1m9 0h1m9 0h1m10 0h1m9 0h1m9 0h1m9 0h1m10 0h1m9 0h1m9 0h1m9 0h1m10 0h1m9 0h1m9 0h1M0 536.5h1m9 0h1m9 0h1m10 0h1m9 0h1m9 0h1m9 0h1m10 0h1m9 0h1m9 0h1m9 0h1m10 0h1m9 0h1m9 0h1m9 0h1m10 0h1m9 0h1m9 0h1m9 0h1m10 0h1m9 0h1m9 0h1m9 0h1m10 0h1m9 0h1m9 0h1m9 0h1m10 0h1m9 0h1m9 0h1m9 0h1m10 0h1m9 0h1m9 0h1m9 0h1m10 0h1m9 0h1m9 0h1m9 0h1m10 0h1m9 0h1m9 0h1m9 0h1m10 0h1m9 0h1m9 0h1m9 0h1m10 0h1m9 0h1m9 0h1m9 0h1m10 0h1m9 0h1m9 0h1m9 0h1m10 0h1m9 0h1m9 0h1m9 0h1m10 0h1m9 0h1m9 0h1m9 0h1m10 0h1m9 0h1m9 0h1m9 0h1m10 0h1m9 0h1m9 0h1m9 0h1m10 0h1m9 0h1m9 0h1m9 0h1m10 0h1m9 0h1m9 0h1m9 0h1m10 0h1m9 0h1m9 0h1m9 0h1m10 0h1m9 0h1m9 0h1m9 0h1m10 0h1m9 0h1m9 0h1m9 0h1m10 0h1m9 0h1m9 0h1m9 0h1m10 0h1m9 0h1m9 0h1m9 0h1m10 0h1m9 0h1m9 0h1M0 526.5h1m9 0h1m9 0h1m10 0h1m9 0h1m9 0h1m9 0h1m10 0h1m9 0h1m9 0h1m9 0h1m10 0h1m9 0h1m9 0h1m9 0h1m10 0h1m9 0h1m9 0h1m9 0h1m10 0h1m9 0h1m9 0h1m9 0h1m10 0h1m9 0h1m9 0h1m9 0h1m10 0h1m9 0h1m9 0h1m9 0h1m10 0h1m9 0h1m9 0h1m9 0h1m10 0h1m9 0h1m9 0h1m9 0h1m10 0h1m9 0h1m9 0h1m9 0h1m10 0h1m9 0h1m9 0h1m9 0h1m10 0h1m9 0h1m9 0h1m9 0h1m10 0h1m9 0h1m9 0h1m9 0h1m10 0h1m9 0h1m9 0h1m9 0h1m10 0h1m9 0h1m9 0h1m9 0h1m10 0h1m9 0h1m9 0h1m9 0h1m10 0h1m9 0h1m9 0h1m9 0h1m10 0h1m9 0h1m9 0h1m9 0h1m10 0h1m9 0h1m9 0h1m9 0h1m10 0h1m9 0h1m9 0h1m9 0h1m10 0h1m9 0h1m9 0h1m9 0h1m10 0h1m9 0h1m9 0h1m9 0h1m10 0h1m9 0h1m9 0h1m9 0h1m10 0h1m9 0h1m9 0h1m9 0h1m10 0h1m9 0h1m9 0h1M0 515.5h1m9 0h1m9 0h1m10 0h1m9 0h1m9 0h1m9 0h1m10 0h1m9 0h1m9 0h1m9 0h1m10 0h1m9 0h1m9 0h1m9 0h1m10 0h1m9 0h1m9 0h1m9 0h1m10 0h1m9 0h1m9 0h1m9 0h1m10 0h1m9 0h1m9 0h1m9 0h1m10 0h1m9 0h1m9 0h1m9 0h1m10 0h1m9 0h1m9 0h1m9 0h1m10 0h1m9 0h1m9 0h1m9 0h1m10 0h1m9 0h1m9 0h1m9 0h1m10 0h1m9 0h1m9 0h1m9 0h1m10 0h1m9 0h1m9 0h1m9 0h1m10 0h1m9 0h1m9 0h1m9 0h1m10 0h1m9 0h1m9 0h1m9 0h1m10 0h1m9 0h1m9 0h1m9 0h1m10 0h1m9 0h1m9 0h1m9 0h1m10 0h1m9 0h1m9 0h1m9 0h1m10 0h1m9 0h1m9 0h1m9 0h1m10 0h1m9 0h1m9 0h1m9 0h1m10 0h1m9 0h1m9 0h1m9 0h1m10 0h1m9 0h1m9 0h1m9 0h1m10 0h1m9 0h1m9 0h1m9 0h1m10 0h1m9 0h1m9 0h1m9 0h1m10 0h1m9 0h1m9 0h1m9 0h1m10 0h1m9 0h1m9 0h1M0 505.5h1m9 0h1m9 0h1m10 0h1m9 0h1m9 0h1m9 0h1m10 0h1m9 0h1m9 0h1m9 0h1m10 0h1m9 0h1m9 0h1m9 0h1m10 0h1m9 0h1m9 0h1m9 0h1m10 0h1m9 0h1m9 0h1m9 0h1m10 0h1m9 0h1m9 0h1m9 0h1m10 0h1m9 0h1m9 0h1m9 0h1m10 0h1m9 0h1m9 0h1m9 0h1m10 0h1m9 0h1m9 0h1m9 0h1m10 0h1m9 0h1m9 0h1m9 0h1m10 0h1m9 0h1m9 0h1m9 0h1m10 0h1m9 0h1m9 0h1m9 0h1m10 0h1m9 0h1m9 0h1m9 0h1m10 0h1m9 0h1m9 0h1m9 0h1m10 0h1m9 0h1m9 0h1m9 0h1m10 0h1m9 0h1m9 0h1m9 0h1m10 0h1m9 0h1m9 0h1m9 0h1m10 0h1m9 0h1m9 0h1m9 0h1m10 0h1m9 0h1m9 0h1m9 0h1m10 0h1m9 0h1m9 0h1m9 0h1m10 0h1m9 0h1m9 0h1m9 0h1m10 0h1m9 0h1m9 0h1m9 0h1m10 0h1m9 0h1m9 0h1m9 0h1m10 0h1m9 0h1m9 0h1m9 0h1m10 0h1m9 0h1m9 0h1M0 495.5h1m9 0h1m9 0h1m10 0h1m9 0h1m9 0h1m9 0h1m10 0h1m9 0h1m9 0h1m9 0h1m10 0h1m9 0h1m9 0h1m9 0h1m10 0h1m9 0h1m9 0h1m9 0h1m10 0h1m9 0h1m9 0h1m9 0h1m10 0h1m9 0h1m9 0h1m9 0h1m10 0h1m9 0h1m9 0h1m9 0h1m10 0h1m9 0h1m9 0h1m9 0h1m10 0h1m9 0h1m9 0h1m9 0h1m10 0h1m9 0h1m9 0h1m9 0h1m10 0h1m9 0h1m9 0h1m9 0h1m10 0h1m9 0h1m9 0h1m9 0h1m10 0h1m9 0h1m9 0h1m9 0h1m10 0h1m9 0h1m9 0h1m9 0h1m10 0h1m9 0h1m9 0h1m9 0h1m10 0h1m9 0h1m9 0h1m9 0h1m10 0h1m9 0h1m9 0h1m9 0h1m10 0h1m9 0h1m9 0h1m9 0h1m10 0h1m9 0h1m9 0h1m9 0h1m10 0h1m9 0h1m9 0h1m9 0h1m10 0h1m9 0h1m9 0h1m9 0h1m10 0h1m9 0h1m9 0h1m9 0h1m10 0h1m9 0h1m9 0h1m9 0h1m10 0h1m9 0h1m9 0h1m9 0h1m10 0h1m9 0h1m9 0h1M0 485.5h1m9 0h1m9 0h1m10 0h1m9 0h1m9 0h1m9 0h1m10 0h1m9 0h1m9 0h1m9 0h1m10 0h1m9 0h1m9 0h1m9 0h1m10 0h1m9 0h1m9 0h1m9 0h1m10 0h1m9 0h1m9 0h1m9 0h1m10 0h1m9 0h1m9 0h1m9 0h1m10 0h1m9 0h1m9 0h1m9 0h1m10 0h1m9 0h1m9 0h1m9 0h1m10 0h1m9 0h1m9 0h1m9 0h1m10 0h1m9 0h1m9 0h1m9 0h1m10 0h1m9 0h1m9 0h1m9 0h1m10 0h1m9 0h1m9 0h1m9 0h1m10 0h1m9 0h1m9 0h1m9 0h1m10 0h1m9 0h1m9 0h1m9 0h1m10 0h1m9 0h1m9 0h1m9 0h1m10 0h1m9 0h1m9 0h1m9 0h1m10 0h1m9 0h1m9 0h1m9 0h1m10 0h1m9 0h1m9 0h1m9 0h1m10 0h1m9 0h1m9 0h1m9 0h1m10 0h1m9 0h1m9 0h1m9 0h1m10 0h1m9 0h1m9 0h1m9 0h1m10 0h1m9 0h1m9 0h1m9 0h1m10 0h1m9 0h1m9 0h1m9 0h1m10 0h1m9 0h1m9 0h1m9 0h1m10 0h1m9 0h1m9 0h1M0 474.5h1m9 0h1m9 0h1m10 0h1m9 0h1m9 0h1m9 0h1m10 0h1m9 0h1m9 0h1m9 0h1m10 0h1m9 0h1m9 0h1m9 0h1m10 0h1m9 0h1m9 0h1m9 0h1m10 0h1m9 0h1m9 0h1m9 0h1m10 0h1m9 0h1m9 0h1m9 0h1m10 0h1m9 0h1m9 0h1m9 0h1m10 0h1m9 0h1m9 0h1m9 0h1m10 0h1m9 0h1m9 0h1m9 0h1m10 0h1m9 0h1m9 0h1m9 0h1m10 0h1m9 0h1m9 0h1m9 0h1m10 0h1m9 0h1m9 0h1m9 0h1m10 0h1m9 0h1m9 0h1m9 0h1m10 0h1m9 0h1m9 0h1m9 0h1m10 0h1m9 0h1m9 0h1m9 0h1m10 0h1m9 0h1m9 0h1m9 0h1m10 0h1m9 0h1m9 0h1m9 0h1m10 0h1m9 0h1m9 0h1m9 0h1m10 0h1m9 0h1m9 0h1m9 0h1m10 0h1m9 0h1m9 0h1m9 0h1m10 0h1m9 0h1m9 0h1m9 0h1m10 0h1m9 0h1m9 0h1m9 0h1m10 0h1m9 0h1m9 0h1m9 0h1m10 0h1m9 0h1m9 0h1m9 0h1m10 0h1m9 0h1m9 0h1M0 464.5h1m9 0h1m9 0h1m10 0h1m9 0h1m9 0h1m9 0h1m10 0h1m9 0h1m9 0h1m9 0h1m10 0h1m9 0h1m9 0h1m9 0h1m10 0h1m9 0h1m9 0h1m9 0h1m10 0h1m9 0h1m9 0h1m9 0h1m10 0h1m9 0h1m9 0h1m9 0h1m10 0h1m9 0h1m9 0h1m9 0h1m10 0h1m9 0h1m9 0h1m9 0h1m10 0h1m9 0h1m9 0h1m9 0h1m10 0h1m9 0h1m9 0h1m9 0h1m10 0h1m9 0h1m9 0h1m9 0h1m10 0h1m9 0h1m9 0h1m9 0h1m10 0h1m9 0h1m9 0h1m9 0h1m10 0h1m9 0h1m9 0h1m9 0h1m10 0h1m9 0h1m9 0h1m9 0h1m10 0h1m9 0h1m9 0h1m9 0h1m10 0h1m9 0h1m9 0h1m9 0h1m10 0h1m9 0h1m9 0h1m9 0h1m10 0h1m9 0h1m9 0h1m9 0h1m10 0h1m9 0h1m9 0h1m9 0h1m10 0h1m9 0h1m9 0h1m9 0h1m10 0h1m9 0h1m9 0h1m9 0h1m10 0h1m9 0h1m9 0h1m9 0h1m10 0h1m9 0h1m9 0h1m9 0h1m10 0h1m9 0h1m9 0h1M0 454.5h1m9 0h1m9 0h1m10 0h1m9 0h1m9 0h1m9 0h1m10 0h1m9 0h1m9 0h1m9 0h1m10 0h1m9 0h1m9 0h1m9 0h1m10 0h1m9 0h1m9 0h1m9 0h1m10 0h1m9 0h1m9 0h1m9 0h1m10 0h1m9 0h1m9 0h1m9 0h1m10 0h1m9 0h1m9 0h1m9 0h1m10 0h1m9 0h1m9 0h1m9 0h1m10 0h1m9 0h1m9 0h1m9 0h1m10 0h1m9 0h1m9 0h1m9 0h1m10 0h1m9 0h1m9 0h1m9 0h1m10 0h1m9 0h1m9 0h1m9 0h1m10 0h1m9 0h1m9 0h1m9 0h1m10 0h1m9 0h1m9 0h1m9 0h1m10 0h1m9 0h1m9 0h1m9 0h1m10 0h1m9 0h1m9 0h1m9 0h1m10 0h1m9 0h1m9 0h1m9 0h1m10 0h1m9 0h1m9 0h1m9 0h1m10 0h1m9 0h1m9 0h1m9 0h1m10 0h1m9 0h1m9 0h1m9 0h1m10 0h1m9 0h1m9 0h1m9 0h1m10 0h1m9 0h1m9 0h1m9 0h1m10 0h1m9 0h1m9 0h1m9 0h1m10 0h1m9 0h1m9 0h1m9 0h1m10 0h1m9 0h1m9 0h1M0 444.5h1m9 0h1m9 0h1m10 0h1m9 0h1m9 0h1m9 0h1m10 0h1m9 0h1m9 0h1m9 0h1m10 0h1m9 0h1m9 0h1m9 0h1m10 0h1m9 0h1m9 0h1m9 0h1m10 0h1m9 0h1m9 0h1m9 0h1m10 0h1m9 0h1m9 0h1m9 0h1m10 0h1m9 0h1m9 0h1m9 0h1m10 0h1m9 0h1m9 0h1m9 0h1m10 0h1m9 0h1m9 0h1m9 0h1m10 0h1m9 0h1m9 0h1m9 0h1m10 0h1m9 0h1m9 0h1m9 0h1m10 0h1m9 0h1m9 0h1m9 0h1m10 0h1m9 0h1m9 0h1m9 0h1m10 0h1m9 0h1m9 0h1m9 0h1m10 0h1m9 0h1m9 0h1m9 0h1m10 0h1m9 0h1m9 0h1m9 0h1m10 0h1m9 0h1m9 0h1m9 0h1m10 0h1m9 0h1m9 0h1m9 0h1m10 0h1m9 0h1m9 0h1m9 0h1m10 0h1m9 0h1m9 0h1m9 0h1m10 0h1m9 0h1m9 0h1m9 0h1m10 0h1m9 0h1m9 0h1m9 0h1m10 0h1m9 0h1m9 0h1m9 0h1m10 0h1m9 0h1m9 0h1m9 0h1m10 0h1m9 0h1m9 0h1M0 433.5h1m9 0h1m9 0h1m10 0h1m9 0h1m9 0h1m9 0h1m10 0h1m9 0h1m9 0h1m9 0h1m10 0h1m9 0h1m9 0h1m9 0h1m10 0h1m9 0h1m9 0h1m9 0h1m10 0h1m9 0h1m9 0h1m9 0h1m10 0h1m9 0h1m9 0h1m9 0h1m10 0h1m9 0h1m9 0h1m9 0h1m10 0h1m9 0h1m9 0h1m9 0h1m10 0h1m9 0h1m9 0h1m9 0h1m10 0h1m9 0h1m9 0h1m9 0h1m10 0h1m9 0h1m9 0h1m9 0h1m10 0h1m9 0h1m9 0h1m9 0h1m10 0h1m9 0h1m9 0h1m9 0h1m10 0h1m9 0h1m9 0h1m9 0h1m10 0h1m9 0h1m9 0h1m9 0h1m10 0h1m9 0h1m9 0h1m9 0h1m10 0h1m9 0h1m9 0h1m9 0h1m10 0h1m9 0h1m9 0h1m9 0h1m10 0h1m9 0h1m9 0h1m9 0h1m10 0h1m9 0h1m9 0h1m9 0h1m10 0h1m9 0h1m9 0h1m9 0h1m10 0h1m9 0h1m9 0h1m9 0h1m10 0h1m9 0h1m9 0h1m9 0h1m10 0h1m9 0h1m9 0h1m9 0h1m10 0h1m9 0h1m9 0h1M0 423.5h1m9 0h1m9 0h1m10 0h1m9 0h1m9 0h1m9 0h1m10 0h1m9 0h1m9 0h1m9 0h1m10 0h1m9 0h1m9 0h1m9 0h1m10 0h1m9 0h1m9 0h1m9 0h1m10 0h1m9 0h1m9 0h1m9 0h1m10 0h1m9 0h1m9 0h1m9 0h1m10 0h1m9 0h1m9 0h1m9 0h1m10 0h1m9 0h1m9 0h1m9 0h1m10 0h1m9 0h1m9 0h1m9 0h1m10 0h1m9 0h1m9 0h1m9 0h1m10 0h1m9 0h1m9 0h1m9 0h1m10 0h1m9 0h1m9 0h1m9 0h1m10 0h1m9 0h1m9 0h1m9 0h1m10 0h1m9 0h1m9 0h1m9 0h1m10 0h1m9 0h1m9 0h1m9 0h1m10 0h1m9 0h1m9 0h1m9 0h1m10 0h1m9 0h1m9 0h1m9 0h1m10 0h1m9 0h1m9 0h1m9 0h1m10 0h1m9 0h1m9 0h1m9 0h1m10 0h1m9 0h1m9 0h1m9 0h1m10 0h1m9 0h1m9 0h1m9 0h1m10 0h1m9 0h1m9 0h1m9 0h1m10 0h1m9 0h1m9 0h1m9 0h1m10 0h1m9 0h1m9 0h1m9 0h1m10 0h1m9 0h1m9 0h1M0 413.5h1m9 0h1m9 0h1m10 0h1m9 0h1m9 0h1m9 0h1m10 0h1m9 0h1m9 0h1m9 0h1m10 0h1m9 0h1m9 0h1m9 0h1m10 0h1m9 0h1m9 0h1m9 0h1m10 0h1m9 0h1m9 0h1m9 0h1m10 0h1m9 0h1m9 0h1m9 0h1m10 0h1m9 0h1m9 0h1m9 0h1m10 0h1m9 0h1m9 0h1m9 0h1m10 0h1m9 0h1m9 0h1m9 0h1m10 0h1m9 0h1m9 0h1m9 0h1m10 0h1m9 0h1m9 0h1m9 0h1m10 0h1m9 0h1m9 0h1m9 0h1m10 0h1m9 0h1m9 0h1m9 0h1m10 0h1m9 0h1m9 0h1m9 0h1m10 0h1m9 0h1m9 0h1m9 0h1m10 0h1m9 0h1m9 0h1m9 0h1m10 0h1m9 0h1m9 0h1m9 0h1m10 0h1m9 0h1m9 0h1m9 0h1m10 0h1m9 0h1m9 0h1m9 0h1m10 0h1m9 0h1m9 0h1m9 0h1m10 0h1m9 0h1m9 0h1m9 0h1m10 0h1m9 0h1m9 0h1m9 0h1m10 0h1m9 0h1m9 0h1m9 0h1m10 0h1m9 0h1m9 0h1m9 0h1m10 0h1m9 0h1m9 0h1M0 403.5h1m9 0h1m9 0h1m10 0h1m9 0h1m9 0h1m9 0h1m10 0h1m9 0h1m9 0h1m9 0h1m10 0h1m9 0h1m9 0h1m9 0h1m10 0h1m9 0h1m9 0h1m9 0h1m10 0h1m9 0h1m9 0h1m9 0h1m10 0h1m9 0h1m9 0h1m9 0h1m10 0h1m9 0h1m9 0h1m9 0h1m10 0h1m9 0h1m9 0h1m9 0h1m10 0h1m9 0h1m9 0h1m9 0h1m10 0h1m9 0h1m9 0h1m9 0h1m10 0h1m9 0h1m9 0h1m9 0h1m10 0h1m9 0h1m9 0h1m9 0h1m10 0h1m9 0h1m9 0h1m9 0h1m10 0h1m9 0h1m9 0h1m9 0h1m10 0h1m9 0h1m9 0h1m9 0h1m10 0h1m9 0h1m9 0h1m9 0h1m10 0h1m9 0h1m9 0h1m9 0h1m10 0h1m9 0h1m9 0h1m9 0h1m10 0h1m9 0h1m9 0h1m9 0h1m10 0h1m9 0h1m9 0h1m9 0h1m10 0h1m9 0h1m9 0h1m9 0h1m10 0h1m9 0h1m9 0h1m9 0h1m10 0h1m9 0h1m9 0h1m9 0h1m10 0h1m9 0h1m9 0h1m9 0h1m10 0h1m9 0h1m9 0h1M0 392.5h1m9 0h1m9 0h1m10 0h1m9 0h1m9 0h1m9 0h1m10 0h1m9 0h1m9 0h1m9 0h1m10 0h1m9 0h1m9 0h1m9 0h1m10 0h1m9 0h1m9 0h1m9 0h1m10 0h1m9 0h1m9 0h1m9 0h1m10 0h1m9 0h1m9 0h1m9 0h1m10 0h1m9 0h1m9 0h1m9 0h1m10 0h1m9 0h1m9 0h1m9 0h1m10 0h1m9 0h1m9 0h1m9 0h1m10 0h1m9 0h1m9 0h1m9 0h1m10 0h1m9 0h1m9 0h1m9 0h1m10 0h1m9 0h1m9 0h1m9 0h1m10 0h1m9 0h1m9 0h1m9 0h1m10 0h1m9 0h1m9 0h1m9 0h1m10 0h1m9 0h1m9 0h1m9 0h1m10 0h1m9 0h1m9 0h1m9 0h1m10 0h1m9 0h1m9 0h1m9 0h1m10 0h1m9 0h1m9 0h1m9 0h1m10 0h1m9 0h1m9 0h1m9 0h1m10 0h1m9 0h1m9 0h1m9 0h1m10 0h1m9 0h1m9 0h1m9 0h1m10 0h1m9 0h1m9 0h1m9 0h1m10 0h1m9 0h1m9 0h1m9 0h1m10 0h1m9 0h1m9 0h1m9 0h1m10 0h1m9 0h1m9 0h1M0 382.5h1m9 0h1m9 0h1m10 0h1m9 0h1m9 0h1m9 0h1m10 0h1m9 0h1m9 0h1m9 0h1m10 0h1m9 0h1m9 0h1m9 0h1m10 0h1m9 0h1m9 0h1m9 0h1m10 0h1m9 0h1m9 0h1m9 0h1m10 0h1m9 0h1m9 0h1m9 0h1m10 0h1m9 0h1m9 0h1m9 0h1m10 0h1m9 0h1m9 0h1m9 0h1m10 0h1m9 0h1m9 0h1m9 0h1m10 0h1m9 0h1m9 0h1m9 0h1m10 0h1m9 0h1m9 0h1m9 0h1m10 0h1m9 0h1m9 0h1m9 0h1m10 0h1m9 0h1m9 0h1m9 0h1m10 0h1m9 0h1m9 0h1m9 0h1m10 0h1m9 0h1m9 0h1m9 0h1m10 0h1m9 0h1m9 0h1m9 0h1m10 0h1m9 0h1m9 0h1m9 0h1m10 0h1m9 0h1m9 0h1m9 0h1m10 0h1m9 0h1m9 0h1m9 0h1m10 0h1m9 0h1m9 0h1m9 0h1m10 0h1m9 0h1m9 0h1m9 0h1m10 0h1m9 0h1m9 0h1m9 0h1m10 0h1m9 0h1m9 0h1m9 0h1m10 0h1m9 0h1m9 0h1m9 0h1m10 0h1m9 0h1m9 0h1M0 372.5h1m9 0h1m9 0h1m10 0h1m9 0h1m9 0h1m9 0h1m10 0h1m9 0h1m9 0h1m9 0h1m10 0h1m9 0h1m9 0h1m9 0h1m10 0h1m9 0h1m9 0h1m9 0h1m10 0h1m9 0h1m9 0h1m9 0h1m10 0h1m9 0h1m9 0h1m9 0h1m10 0h1m9 0h1m9 0h1m9 0h1m10 0h1m9 0h1m9 0h1m9 0h1m10 0h1m9 0h1m9 0h1m9 0h1m10 0h1m9 0h1m9 0h1m9 0h1m10 0h1m9 0h1m9 0h1m9 0h1m10 0h1m9 0h1m9 0h1m9 0h1m10 0h1m9 0h1m9 0h1m9 0h1m10 0h1m9 0h1m9 0h1m9 0h1m10 0h1m9 0h1m9 0h1m9 0h1m10 0h1m9 0h1m9 0h1m9 0h1m10 0h1m9 0h1m9 0h1m9 0h1m10 0h1m9 0h1m9 0h1m9 0h1m10 0h1m9 0h1m9 0h1m9 0h1m10 0h1m9 0h1m9 0h1m9 0h1m10 0h1m9 0h1m9 0h1m9 0h1m10 0h1m9 0h1m9 0h1m9 0h1m10 0h1m9 0h1m9 0h1m9 0h1m10 0h1m9 0h1m9 0h1m9 0h1m10 0h1m9 0h1m9 0h1M0 362.5h1m9 0h1m9 0h1m10 0h1m9 0h1m9 0h1m9 0h1m10 0h1m9 0h1m9 0h1m9 0h1m10 0h1m9 0h1m9 0h1m9 0h1m10 0h1m9 0h1m9 0h1m9 0h1m10 0h1m9 0h1m9 0h1m9 0h1m10 0h1m9 0h1m9 0h1m9 0h1m10 0h1m9 0h1m9 0h1m9 0h1m10 0h1m9 0h1m9 0h1m9 0h1m10 0h1m9 0h1m9 0h1m9 0h1m10 0h1m9 0h1m9 0h1m9 0h1m10 0h1m9 0h1m9 0h1m9 0h1m10 0h1m9 0h1m9 0h1m9 0h1m10 0h1m9 0h1m9 0h1m9 0h1m10 0h1m9 0h1m9 0h1m9 0h1m10 0h1m9 0h1m9 0h1m9 0h1m10 0h1m9 0h1m9 0h1m9 0h1m10 0h1m9 0h1m9 0h1m9 0h1m10 0h1m9 0h1m9 0h1m9 0h1m10 0h1m9 0h1m9 0h1m9 0h1m10 0h1m9 0h1m9 0h1m9 0h1m10 0h1m9 0h1m9 0h1m9 0h1m10 0h1m9 0h1m9 0h1m9 0h1m10 0h1m9 0h1m9 0h1m9 0h1m10 0h1m9 0h1m9 0h1m9 0h1m10 0h1m9 0h1m9 0h1M0 351.5h1m9 0h1m9 0h1m10 0h1m9 0h1m9 0h1m9 0h1m10 0h1m9 0h1m9 0h1m9 0h1m10 0h1m9 0h1m9 0h1m9 0h1m10 0h1m9 0h1m9 0h1m9 0h1m10 0h1m9 0h1m9 0h1m9 0h1m10 0h1m9 0h1m9 0h1m9 0h1m10 0h1m9 0h1m9 0h1m9 0h1m10 0h1m9 0h1m9 0h1m9 0h1m10 0h1m9 0h1m9 0h1m9 0h1m10 0h1m9 0h1m9 0h1m9 0h1m10 0h1m9 0h1m9 0h1m9 0h1m10 0h1m9 0h1m9 0h1m9 0h1m10 0h1m9 0h1m9 0h1m9 0h1m10 0h1m9 0h1m9 0h1m9 0h1m10 0h1m9 0h1m9 0h1m9 0h1m10 0h1m9 0h1m9 0h1m9 0h1m10 0h1m9 0h1m9 0h1m9 0h1m10 0h1m9 0h1m9 0h1m9 0h1m10 0h1m9 0h1m9 0h1m9 0h1m10 0h1m9 0h1m9 0h1m9 0h1m10 0h1m9 0h1m9 0h1m9 0h1m10 0h1m9 0h1m9 0h1m9 0h1m10 0h1m9 0h1m9 0h1m9 0h1m10 0h1m9 0h1m9 0h1m9 0h1m10 0h1m9 0h1m9 0h1M0 341.5h1m9 0h1m9 0h1m10 0h1m9 0h1m9 0h1m9 0h1m10 0h1m9 0h1m9 0h1m9 0h1m10 0h1m9 0h1m9 0h1m9 0h1m10 0h1m9 0h1m9 0h1m9 0h1m10 0h1m9 0h1m9 0h1m9 0h1m10 0h1m9 0h1m9 0h1m9 0h1m10 0h1m9 0h1m9 0h1m9 0h1m10 0h1m9 0h1m9 0h1m9 0h1m10 0h1m9 0h1m9 0h1m9 0h1m10 0h1m9 0h1m9 0h1m9 0h1m10 0h1m9 0h1m9 0h1m9 0h1m10 0h1m9 0h1m9 0h1m9 0h1m10 0h1m9 0h1m9 0h1m9 0h1m10 0h1m9 0h1m9 0h1m9 0h1m10 0h1m9 0h1m9 0h1m9 0h1m10 0h1m9 0h1m9 0h1m9 0h1m10 0h1m9 0h1m9 0h1m9 0h1m10 0h1m9 0h1m9 0h1m9 0h1m10 0h1m9 0h1m9 0h1m9 0h1m10 0h1m9 0h1m9 0h1m9 0h1m10 0h1m9 0h1m9 0h1m9 0h1m10 0h1m9 0h1m9 0h1m9 0h1m10 0h1m9 0h1m9 0h1m9 0h1m10 0h1m9 0h1m9 0h1m9 0h1m10 0h1m9 0h1m9 0h1M0 331.5h1m9 0h1m9 0h1m10 0h1m9 0h1m9 0h1m9 0h1m10 0h1m9 0h1m9 0h1m9 0h1m10 0h1m9 0h1m9 0h1m9 0h1m10 0h1m9 0h1m9 0h1m9 0h1m10 0h1m9 0h1m9 0h1m9 0h1m10 0h1m9 0h1m9 0h1m9 0h1m10 0h1m9 0h1m9 0h1m9 0h1m10 0h1m9 0h1m9 0h1m9 0h1m10 0h1m9 0h1m9 0h1m9 0h1m10 0h1m9 0h1m9 0h1m9 0h1m10 0h1m9 0h1m9 0h1m9 0h1m10 0h1m9 0h1m9 0h1m9 0h1m10 0h1m9 0h1m9 0h1m9 0h1m10 0h1m9 0h1m9 0h1m9 0h1m10 0h1m9 0h1m9 0h1m9 0h1m10 0h1m9 0h1m9 0h1m9 0h1m10 0h1m9 0h1m9 0h1m9 0h1m10 0h1m9 0h1m9 0h1m9 0h1m10 0h1m9 0h1m9 0h1m9 0h1m10 0h1m9 0h1m9 0h1m9 0h1m10 0h1m9 0h1m9 0h1m9 0h1m10 0h1m9 0h1m9 0h1m9 0h1m10 0h1m9 0h1m9 0h1m9 0h1m10 0h1m9 0h1m9 0h1m9 0h1m10 0h1m9 0h1m9 0h1M0 321.5h1m9 0h1m9 0h1m10 0h1m9 0h1m9 0h1m9 0h1m10 0h1m9 0h1m9 0h1m9 0h1m10 0h1m9 0h1m9 0h1m9 0h1m10 0h1m9 0h1m9 0h1m9 0h1m10 0h1m9 0h1m9 0h1m9 0h1m10 0h1m9 0h1m9 0h1m9 0h1m10 0h1m9 0h1m9 0h1m9 0h1m10 0h1m9 0h1m9 0h1m9 0h1m10 0h1m9 0h1m9 0h1m9 0h1m10 0h1m9 0h1m9 0h1m9 0h1m10 0h1m9 0h1m9 0h1m9 0h1m10 0h1m9 0h1m9 0h1m9 0h1m10 0h1m9 0h1m9 0h1m9 0h1m10 0h1m9 0h1m9 0h1m9 0h1m10 0h1m9 0h1m9 0h1m9 0h1m10 0h1m9 0h1m9 0h1m9 0h1m10 0h1m9 0h1m9 0h1m9 0h1m10 0h1m9 0h1m9 0h1m9 0h1m10 0h1m9 0h1m9 0h1m9 0h1m10 0h1m9 0h1m9 0h1m9 0h1m10 0h1m9 0h1m9 0h1m9 0h1m10 0h1m9 0h1m9 0h1m9 0h1m10 0h1m9 0h1m9 0h1m9 0h1m10 0h1m9 0h1m9 0h1m9 0h1m10 0h1m9 0h1m9 0h1M0 310.5h1m9 0h1m9 0h1m10 0h1m9 0h1m9 0h1m9 0h1m10 0h1m9 0h1m9 0h1m9 0h1m10 0h1m9 0h1m9 0h1m9 0h1m10 0h1m9 0h1m9 0h1m9 0h1m10 0h1m9 0h1m9 0h1m9 0h1m10 0h1m9 0h1m9 0h1m9 0h1m10 0h1m9 0h1m9 0h1m9 0h1m10 0h1m9 0h1m9 0h1m9 0h1m10 0h1m9 0h1m9 0h1m9 0h1m10 0h1m9 0h1m9 0h1m9 0h1m10 0h1m9 0h1m9 0h1m9 0h1m10 0h1m9 0h1m9 0h1m9 0h1m10 0h1m9 0h1m9 0h1m9 0h1m10 0h1m9 0h1m9 0h1m9 0h1m10 0h1m9 0h1m9 0h1m9 0h1m10 0h1m9 0h1m9 0h1m9 0h1m10 0h1m9 0h1m9 0h1m9 0h1m10 0h1m9 0h1m9 0h1m9 0h1m10 0h1m9 0h1m9 0h1m9 0h1m10 0h1m9 0h1m9 0h1m9 0h1m10 0h1m9 0h1m9 0h1m9 0h1m10 0h1m9 0h1m9 0h1m9 0h1m10 0h1m9 0h1m9 0h1m9 0h1m10 0h1m9 0h1m9 0h1m9 0h1m10 0h1m9 0h1m9 0h1M0 300.5h1m9 0h1m9 0h1m10 0h1m9 0h1m9 0h1m9 0h1m10 0h1m9 0h1m9 0h1m9 0h1m10 0h1m9 0h1m9 0h1m9 0h1m10 0h1m9 0h1m9 0h1m9 0h1m10 0h1m9 0h1m9 0h1m9 0h1m10 0h1m9 0h1m9 0h1m9 0h1m10 0h1m9 0h1m9 0h1m9 0h1m10 0h1m9 0h1m9 0h1m9 0h1m10 0h1m9 0h1m9 0h1m9 0h1m10 0h1m9 0h1m9 0h1m9 0h1m10 0h1m9 0h1m9 0h1m9 0h1m10 0h1m9 0h1m9 0h1m9 0h1m10 0h1m9 0h1m9 0h1m9 0h1m10 0h1m9 0h1m9 0h1m9 0h1m10 0h1m9 0h1m9 0h1m9 0h1m10 0h1m9 0h1m9 0h1m9 0h1m10 0h1m9 0h1m9 0h1m9 0h1m10 0h1m9 0h1m9 0h1m9 0h1m10 0h1m9 0h1m9 0h1m9 0h1m10 0h1m9 0h1m9 0h1m9 0h1m10 0h1m9 0h1m9 0h1m9 0h1m10 0h1m9 0h1m9 0h1m9 0h1m10 0h1m9 0h1m9 0h1m9 0h1m10 0h1m9 0h1m9 0h1m9 0h1m10 0h1m9 0h1m9 0h1M0 290.5h1m9 0h1m9 0h1m10 0h1m9 0h1m9 0h1m9 0h1m10 0h1m9 0h1m9 0h1m9 0h1m10 0h1m9 0h1m9 0h1m9 0h1m10 0h1m9 0h1m9 0h1m9 0h1m10 0h1m9 0h1m9 0h1m9 0h1m10 0h1m9 0h1m9 0h1m9 0h1m10 0h1m9 0h1m9 0h1m9 0h1m10 0h1m9 0h1m9 0h1m9 0h1m10 0h1m9 0h1m9 0h1m9 0h1m10 0h1m9 0h1m9 0h1m9 0h1m10 0h1m9 0h1m9 0h1m9 0h1m10 0h1m9 0h1m9 0h1m9 0h1m10 0h1m9 0h1m9 0h1m9 0h1m10 0h1m9 0h1m9 0h1m9 0h1m10 0h1m9 0h1m9 0h1m9 0h1m10 0h1m9 0h1m9 0h1m9 0h1m10 0h1m9 0h1m9 0h1m9 0h1m10 0h1m9 0h1m9 0h1m9 0h1m10 0h1m9 0h1m9 0h1m9 0h1m10 0h1m9 0h1m9 0h1m9 0h1m10 0h1m9 0h1m9 0h1m9 0h1m10 0h1m9 0h1m9 0h1m9 0h1m10 0h1m9 0h1m9 0h1m9 0h1m10 0h1m9 0h1m9 0h1m9 0h1m10 0h1m9 0h1m9 0h1M0 280.5h1m9 0h1m9 0h1m10 0h1m9 0h1m9 0h1m9 0h1m10 0h1m9 0h1m9 0h1m9 0h1m10 0h1m9 0h1m9 0h1m9 0h1m10 0h1m9 0h1m9 0h1m9 0h1m10 0h1m9 0h1m9 0h1m9 0h1m10 0h1m9 0h1m9 0h1m9 0h1m10 0h1m9 0h1m9 0h1m9 0h1m10 0h1m9 0h1m9 0h1m9 0h1m10 0h1m9 0h1m9 0h1m9 0h1m10 0h1m9 0h1m9 0h1m9 0h1m10 0h1m9 0h1m9 0h1m9 0h1m10 0h1m9 0h1m9 0h1m9 0h1m10 0h1m9 0h1m9 0h1m9 0h1m10 0h1m9 0h1m9 0h1m9 0h1m10 0h1m9 0h1m9 0h1m9 0h1m10 0h1m9 0h1m9 0h1m9 0h1m10 0h1m9 0h1m9 0h1m9 0h1m10 0h1m9 0h1m9 0h1m9 0h1m10 0h1m9 0h1m9 0h1m9 0h1m10 0h1m9 0h1m9 0h1m9 0h1m10 0h1m9 0h1m9 0h1m9 0h1m10 0h1m9 0h1m9 0h1m9 0h1m10 0h1m9 0h1m9 0h1m9 0h1m10 0h1m9 0h1m9 0h1m9 0h1m10 0h1m9 0h1m9 0h1M0 269.5h1m9 0h1m9 0h1m10 0h1m9 0h1m9 0h1m9 0h1m10 0h1m9 0h1m9 0h1m9 0h1m10 0h1m9 0h1m9 0h1m9 0h1m10 0h1m9 0h1m9 0h1m9 0h1m10 0h1m9 0h1m9 0h1m9 0h1m10 0h1m9 0h1m9 0h1m9 0h1m10 0h1m9 0h1m9 0h1m9 0h1m10 0h1m9 0h1m9 0h1m9 0h1m10 0h1m9 0h1m9 0h1m9 0h1m10 0h1m9 0h1m9 0h1m9 0h1m10 0h1m9 0h1m9 0h1m9 0h1m10 0h1m9 0h1m9 0h1m9 0h1m10 0h1m9 0h1m9 0h1m9 0h1m10 0h1m9 0h1m9 0h1m9 0h1m10 0h1m9 0h1m9 0h1m9 0h1m10 0h1m9 0h1m9 0h1m9 0h1m10 0h1m9 0h1m9 0h1m9 0h1m10 0h1m9 0h1m9 0h1m9 0h1m10 0h1m9 0h1m9 0h1m9 0h1m10 0h1m9 0h1m9 0h1m9 0h1m10 0h1m9 0h1m9 0h1m9 0h1m10 0h1m9 0h1m9 0h1m9 0h1m10 0h1m9 0h1m9 0h1m9 0h1m10 0h1m9 0h1m9 0h1m9 0h1m10 0h1m9 0h1m9 0h1M0 259.5h1m9 0h1m9 0h1m10 0h1m9 0h1m9 0h1m9 0h1m10 0h1m9 0h1m9 0h1m9 0h1m10 0h1m9 0h1m9 0h1m9 0h1m10 0h1m9 0h1m9 0h1m9 0h1m10 0h1m9 0h1m9 0h1m9 0h1m10 0h1m9 0h1m9 0h1m9 0h1m10 0h1m9 0h1m9 0h1m9 0h1m10 0h1m9 0h1m9 0h1m9 0h1m10 0h1m9 0h1m9 0h1m9 0h1m10 0h1m9 0h1m9 0h1m9 0h1m10 0h1m9 0h1m9 0h1m9 0h1m10 0h1m9 0h1m9 0h1m9 0h1m10 0h1m9 0h1m9 0h1m9 0h1m10 0h1m9 0h1m9 0h1m9 0h1m10 0h1m9 0h1m9 0h1m9 0h1m10 0h1m9 0h1m9 0h1m9 0h1m10 0h1m9 0h1m9 0h1m9 0h1m10 0h1m9 0h1m9 0h1m9 0h1m10 0h1m9 0h1m9 0h1m9 0h1m10 0h1m9 0h1m9 0h1m9 0h1m10 0h1m9 0h1m9 0h1m9 0h1m10 0h1m9 0h1m9 0h1m9 0h1m10 0h1m9 0h1m9 0h1m9 0h1m10 0h1m9 0h1m9 0h1m9 0h1m10 0h1m9 0h1m9 0h1M0 249.5h1m9 0h1m9 0h1m10 0h1m9 0h1m9 0h1m9 0h1m10 0h1m9 0h1m9 0h1m9 0h1m10 0h1m9 0h1m9 0h1m9 0h1m10 0h1m9 0h1m9 0h1m9 0h1m10 0h1m9 0h1m9 0h1m9 0h1m10 0h1m9 0h1m9 0h1m9 0h1m10 0h1m9 0h1m9 0h1m9 0h1m10 0h1m9 0h1m9 0h1m9 0h1m10 0h1m9 0h1m9 0h1m9 0h1m10 0h1m9 0h1m9 0h1m9 0h1m10 0h1m9 0h1m9 0h1m9 0h1m10 0h1m9 0h1m9 0h1m9 0h1m10 0h1m9 0h1m9 0h1m9 0h1m10 0h1m9 0h1m9 0h1m9 0h1m10 0h1m9 0h1m9 0h1m9 0h1m10 0h1m9 0h1m9 0h1m9 0h1m10 0h1m9 0h1m9 0h1m9 0h1m10 0h1m9 0h1m9 0h1m9 0h1m10 0h1m9 0h1m9 0h1m9 0h1m10 0h1m9 0h1m9 0h1m9 0h1m10 0h1m9 0h1m9 0h1m9 0h1m10 0h1m9 0h1m9 0h1m9 0h1m10 0h1m9 0h1m9 0h1m9 0h1m10 0h1m9 0h1m9 0h1m9 0h1m10 0h1m9 0h1m9 0h1M0 239.5h1m9 0h1m9 0h1m10 0h1m9 0h1m9 0h1m9 0h1m10 0h1m9 0h1m9 0h1m9 0h1m10 0h1m9 0h1m9 0h1m9 0h1m10 0h1m9 0h1m9 0h1m9 0h1m10 0h1m9 0h1m9 0h1m9 0h1m10 0h1m9 0h1m9 0h1m9 0h1m10 0h1m9 0h1m9 0h1m9 0h1m10 0h1m9 0h1m9 0h1m9 0h1m10 0h1m9 0h1m9 0h1m9 0h1m10 0h1m9 0h1m9 0h1m9 0h1m10 0h1m9 0h1m9 0h1m9 0h1m10 0h1m9 0h1m9 0h1m9 0h1m10 0h1m9 0h1m9 0h1m9 0h1m10 0h1m9 0h1m9 0h1m9 0h1m10 0h1m9 0h1m9 0h1m9 0h1m10 0h1m9 0h1m9 0h1m9 0h1m10 0h1m9 0h1m9 0h1m9 0h1m10 0h1m9 0h1m9 0h1m9 0h1m10 0h1m9 0h1m9 0h1m9 0h1m10 0h1m9 0h1m9 0h1m9 0h1m10 0h1m9 0h1m9 0h1m9 0h1m10 0h1m9 0h1m9 0h1m9 0h1m10 0h1m9 0h1m9 0h1m9 0h1m10 0h1m9 0h1m9 0h1m9 0h1m10 0h1m9 0h1m9 0h1M0 228.5h1m9 0h1m9 0h1m10 0h1m9 0h1m9 0h1m9 0h1m10 0h1m9 0h1m9 0h1m9 0h1m10 0h1m9 0h1m9 0h1m9 0h1m10 0h1m9 0h1m9 0h1m9 0h1m10 0h1m9 0h1m9 0h1m9 0h1m10 0h1m9 0h1m9 0h1m9 0h1m10 0h1m9 0h1m9 0h1m9 0h1m10 0h1m9 0h1m9 0h1m9 0h1m10 0h1m9 0h1m9 0h1m9 0h1m10 0h1m9 0h1m9 0h1m9 0h1m10 0h1m9 0h1m9 0h1m9 0h1m10 0h1m9 0h1m9 0h1m9 0h1m10 0h1m9 0h1m9 0h1m9 0h1m10 0h1m9 0h1m9 0h1m9 0h1m10 0h1m9 0h1m9 0h1m9 0h1m10 0h1m9 0h1m9 0h1m9 0h1m10 0h1m9 0h1m9 0h1m9 0h1m10 0h1m9 0h1m9 0h1m9 0h1m10 0h1m9 0h1m9 0h1m9 0h1m10 0h1m9 0h1m9 0h1m9 0h1m10 0h1m9 0h1m9 0h1m9 0h1m10 0h1m9 0h1m9 0h1m9 0h1m10 0h1m9 0h1m9 0h1m9 0h1m10 0h1m9 0h1m9 0h1m9 0h1m10 0h1m9 0h1m9 0h1M0 218.5h1m9 0h1m9 0h1m10 0h1m9 0h1m9 0h1m9 0h1m10 0h1m9 0h1m9 0h1m9 0h1m10 0h1m9 0h1m9 0h1m9 0h1m10 0h1m9 0h1m9 0h1m9 0h1m10 0h1m9 0h1m9 0h1m9 0h1m10 0h1m9 0h1m9 0h1m9 0h1m10 0h1m9 0h1m9 0h1m9 0h1m10 0h1m9 0h1m9 0h1m9 0h1m10 0h1m9 0h1m9 0h1m9 0h1m10 0h1m9 0h1m9 0h1m9 0h1m10 0h1m9 0h1m9 0h1m9 0h1m10 0h1m9 0h1m9 0h1m9 0h1m10 0h1m9 0h1m9 0h1m9 0h1m10 0h1m9 0h1m9 0h1m9 0h1m10 0h1m9 0h1m9 0h1m9 0h1m10 0h1m9 0h1m9 0h1m9 0h1m10 0h1m9 0h1m9 0h1m9 0h1m10 0h1m9 0h1m9 0h1m9 0h1m10 0h1m9 0h1m9 0h1m9 0h1m10 0h1m9 0h1m9 0h1m9 0h1m10 0h1m9 0h1m9 0h1m9 0h1m10 0h1m9 0h1m9 0h1m9 0h1m10 0h1m9 0h1m9 0h1m9 0h1m10 0h1m9 0h1m9 0h1m9 0h1m10 0h1m9 0h1m9 0h1M0 208.5h1m9 0h1m9 0h1m10 0h1m9 0h1m9 0h1m9 0h1m10 0h1m9 0h1m9 0h1m9 0h1m10 0h1m9 0h1m9 0h1m9 0h1m10 0h1m9 0h1m9 0h1m9 0h1m10 0h1m9 0h1m9 0h1m9 0h1m10 0h1m9 0h1m9 0h1m9 0h1m10 0h1m9 0h1m9 0h1m9 0h1m10 0h1m9 0h1m9 0h1m9 0h1m10 0h1m9 0h1m9 0h1m9 0h1m10 0h1m9 0h1m9 0h1m9 0h1m10 0h1m9 0h1m9 0h1m9 0h1m10 0h1m9 0h1m9 0h1m9 0h1m10 0h1m9 0h1m9 0h1m9 0h1m10 0h1m9 0h1m9 0h1m9 0h1m10 0h1m9 0h1m9 0h1m9 0h1m10 0h1m9 0h1m9 0h1m9 0h1m10 0h1m9 0h1m9 0h1m9 0h1m10 0h1m9 0h1m9 0h1m9 0h1m10 0h1m9 0h1m9 0h1m9 0h1m10 0h1m9 0h1m9 0h1m9 0h1m10 0h1m9 0h1m9 0h1m9 0h1m10 0h1m9 0h1m9 0h1m9 0h1m10 0h1m9 0h1m9 0h1m9 0h1m10 0h1m9 0h1m9 0h1m9 0h1m10 0h1m9 0h1m9 0h1M0 198.5h1m9 0h1m9 0h1m10 0h1m9 0h1m9 0h1m9 0h1m10 0h1m9 0h1m9 0h1m9 0h1m10 0h1m9 0h1m9 0h1m9 0h1m10 0h1m9 0h1m9 0h1m9 0h1m10 0h1m9 0h1m9 0h1m9 0h1m10 0h1m9 0h1m9 0h1m9 0h1m10 0h1m9 0h1m9 0h1m9 0h1m10 0h1m9 0h1m9 0h1m9 0h1m10 0h1m9 0h1m9 0h1m9 0h1m10 0h1m9 0h1m9 0h1m9 0h1m10 0h1m9 0h1m9 0h1m9 0h1m10 0h1m9 0h1m9 0h1m9 0h1m10 0h1m9 0h1m9 0h1m9 0h1m10 0h1m9 0h1m9 0h1m9 0h1m10 0h1m9 0h1m9 0h1m9 0h1m10 0h1m9 0h1m9 0h1m9 0h1m10 0h1m9 0h1m9 0h1m9 0h1m10 0h1m9 0h1m9 0h1m9 0h1m10 0h1m9 0h1m9 0h1m9 0h1m10 0h1m9 0h1m9 0h1m9 0h1m10 0h1m9 0h1m9 0h1m9 0h1m10 0h1m9 0h1m9 0h1m9 0h1m10 0h1m9 0h1m9 0h1m9 0h1m10 0h1m9 0h1m9 0h1m9 0h1m10 0h1m9 0h1m9 0h1M0 187.5h1m9 0h1m9 0h1m10 0h1m9 0h1m9 0h1m9 0h1m10 0h1m9 0h1m9 0h1m9 0h1m10 0h1m9 0h1m9 0h1m9 0h1m10 0h1m9 0h1m9 0h1m9 0h1m10 0h1m9 0h1m9 0h1m9 0h1m10 0h1m9 0h1m9 0h1m9 0h1m10 0h1m9 0h1m9 0h1m9 0h1m10 0h1m9 0h1m9 0h1m9 0h1m10 0h1m9 0h1m9 0h1m9 0h1m10 0h1m9 0h1m9 0h1m9 0h1m10 0h1m9 0h1m9 0h1m9 0h1m10 0h1m9 0h1m9 0h1m9 0h1m10 0h1m9 0h1m9 0h1m9 0h1m10 0h1m9 0h1m9 0h1m9 0h1m10 0h1m9 0h1m9 0h1m9 0h1m10 0h1m9 0h1m9 0h1m9 0h1m10 0h1m9 0h1m9 0h1m9 0h1m10 0h1m9 0h1m9 0h1m9 0h1m10 0h1m9 0h1m9 0h1m9 0h1m10 0h1m9 0h1m9 0h1m9 0h1m10 0h1m9 0h1m9 0h1m9 0h1m10 0h1m9 0h1m9 0h1m9 0h1m10 0h1m9 0h1m9 0h1m9 0h1m10 0h1m9 0h1m9 0h1m9 0h1m10 0h1m9 0h1m9 0h1M0 177.5h1m9 0h1m9 0h1m10 0h1m9 0h1m9 0h1m9 0h1m10 0h1m9 0h1m9 0h1m9 0h1m10 0h1m9 0h1m9 0h1m9 0h1m10 0h1m9 0h1m9 0h1m9 0h1m10 0h1m9 0h1m9 0h1m9 0h1m10 0h1m9 0h1m9 0h1m9 0h1m10 0h1m9 0h1m9 0h1m9 0h1m10 0h1m9 0h1m9 0h1m9 0h1m10 0h1m9 0h1m9 0h1m9 0h1m10 0h1m9 0h1m9 0h1m9 0h1m10 0h1m9 0h1m9 0h1m9 0h1m10 0h1m9 0h1m9 0h1m9 0h1m10 0h1m9 0h1m9 0h1m9 0h1m10 0h1m9 0h1m9 0h1m9 0h1m10 0h1m9 0h1m9 0h1m9 0h1m10 0h1m9 0h1m9 0h1m9 0h1m10 0h1m9 0h1m9 0h1m9 0h1m10 0h1m9 0h1m9 0h1m9 0h1m10 0h1m9 0h1m9 0h1m9 0h1m10 0h1m9 0h1m9 0h1m9 0h1m10 0h1m9 0h1m9 0h1m9 0h1m10 0h1m9 0h1m9 0h1m9 0h1m10 0h1m9 0h1m9 0h1m9 0h1m10 0h1m9 0h1m9 0h1m9 0h1m10 0h1m9 0h1m9 0h1M0 167.5h1m9 0h1m9 0h1m10 0h1m9 0h1m9 0h1m9 0h1m10 0h1m9 0h1m9 0h1m9 0h1m10 0h1m9 0h1m9 0h1m9 0h1m10 0h1m9 0h1m9 0h1m9 0h1m10 0h1m9 0h1m9 0h1m9 0h1m10 0h1m9 0h1m9 0h1m9 0h1m10 0h1m9 0h1m9 0h1m9 0h1m10 0h1m9 0h1m9 0h1m9 0h1m10 0h1m9 0h1m9 0h1m9 0h1m10 0h1m9 0h1m9 0h1m9 0h1m10 0h1m9 0h1m9 0h1m9 0h1m10 0h1m9 0h1m9 0h1m9 0h1m10 0h1m9 0h1m9 0h1m9 0h1m10 0h1m9 0h1m9 0h1m9 0h1m10 0h1m9 0h1m9 0h1m9 0h1m10 0h1m9 0h1m9 0h1m9 0h1m10 0h1m9 0h1m9 0h1m9 0h1m10 0h1m9 0h1m9 0h1m9 0h1m10 0h1m9 0h1m9 0h1m9 0h1m10 0h1m9 0h1m9 0h1m9 0h1m10 0h1m9 0h1m9 0h1m9 0h1m10 0h1m9 0h1m9 0h1m9 0h1m10 0h1m9 0h1m9 0h1m9 0h1m10 0h1m9 0h1m9 0h1m9 0h1m10 0h1m9 0h1m9 0h1M0 157.5h1m9 0h1m9 0h1m10 0h1m9 0h1m9 0h1m9 0h1m10 0h1m9 0h1m9 0h1m9 0h1m10 0h1m9 0h1m9 0h1m9 0h1m10 0h1m9 0h1m9 0h1m9 0h1m10 0h1m9 0h1m9 0h1m9 0h1m10 0h1m9 0h1m9 0h1m9 0h1m10 0h1m9 0h1m9 0h1m9 0h1m10 0h1m9 0h1m9 0h1m9 0h1m10 0h1m9 0h1m9 0h1m9 0h1m10 0h1m9 0h1m9 0h1m9 0h1m10 0h1m9 0h1m9 0h1m9 0h1m10 0h1m9 0h1m9 0h1m9 0h1m10 0h1m9 0h1m9 0h1m9 0h1m10 0h1m9 0h1m9 0h1m9 0h1m10 0h1m9 0h1m9 0h1m9 0h1m10 0h1m9 0h1m9 0h1m9 0h1m10 0h1m9 0h1m9 0h1m9 0h1m10 0h1m9 0h1m9 0h1m9 0h1m10 0h1m9 0h1m9 0h1m9 0h1m10 0h1m9 0h1m9 0h1m9 0h1m10 0h1m9 0h1m9 0h1m9 0h1m10 0h1m9 0h1m9 0h1m9 0h1m10 0h1m9 0h1m9 0h1m9 0h1m10 0h1m9 0h1m9 0h1m9 0h1m10 0h1m9 0h1m9 0h1M0 146.5h1m9 0h1m9 0h1m10 0h1m9 0h1m9 0h1m9 0h1m10 0h1m9 0h1m9 0h1m9 0h1m10 0h1m9 0h1m9 0h1m9 0h1m10 0h1m9 0h1m9 0h1m9 0h1m10 0h1m9 0h1m9 0h1m9 0h1m10 0h1m9 0h1m9 0h1m9 0h1m10 0h1m9 0h1m9 0h1m9 0h1m10 0h1m9 0h1m9 0h1m9 0h1m10 0h1m9 0h1m9 0h1m9 0h1m10 0h1m9 0h1m9 0h1m9 0h1m10 0h1m9 0h1m9 0h1m9 0h1m10 0h1m9 0h1m9 0h1m9 0h1m10 0h1m9 0h1m9 0h1m9 0h1m10 0h1m9 0h1m9 0h1m9 0h1m10 0h1m9 0h1m9 0h1m9 0h1m10 0h1m9 0h1m9 0h1m9 0h1m10 0h1m9 0h1m9 0h1m9 0h1m10 0h1m9 0h1m9 0h1m9 0h1m10 0h1m9 0h1m9 0h1m9 0h1m10 0h1m9 0h1m9 0h1m9 0h1m10 0h1m9 0h1m9 0h1m9 0h1m10 0h1m9 0h1m9 0h1m9 0h1m10 0h1m9 0h1m9 0h1m9 0h1m10 0h1m9 0h1m9 0h1m9 0h1m10 0h1m9 0h1m9 0h1M0 136.5h1m9 0h1m9 0h1m10 0h1m9 0h1m9 0h1m9 0h1m10 0h1m9 0h1m9 0h1m9 0h1m10 0h1m9 0h1m9 0h1m9 0h1m10 0h1m9 0h1m9 0h1m9 0h1m10 0h1m9 0h1m9 0h1m9 0h1m10 0h1m9 0h1m9 0h1m9 0h1m10 0h1m9 0h1m9 0h1m9 0h1m10 0h1m9 0h1m9 0h1m9 0h1m10 0h1m9 0h1m9 0h1m9 0h1m10 0h1m9 0h1m9 0h1m9 0h1m10 0h1m9 0h1m9 0h1m9 0h1m10 0h1m9 0h1m9 0h1m9 0h1m10 0h1m9 0h1m9 0h1m9 0h1m10 0h1m9 0h1m9 0h1m9 0h1m10 0h1m9 0h1m9 0h1m9 0h1m10 0h1m9 0h1m9 0h1m9 0h1m10 0h1m9 0h1m9 0h1m9 0h1m10 0h1m9 0h1m9 0h1m9 0h1m10 0h1m9 0h1m9 0h1m9 0h1m10 0h1m9 0h1m9 0h1m9 0h1m10 0h1m9 0h1m9 0h1m9 0h1m10 0h1m9 0h1m9 0h1m9 0h1m10 0h1m9 0h1m9 0h1m9 0h1m10 0h1m9 0h1m9 0h1m9 0h1m10 0h1m9 0h1m9 0h1M0 126.5h1m9 0h1m9 0h1m10 0h1m9 0h1m9 0h1m9 0h1m10 0h1m9 0h1m9 0h1m9 0h1m10 0h1m9 0h1m9 0h1m9 0h1m10 0h1m9 0h1m9 0h1m9 0h1m10 0h1m9 0h1m9 0h1m9 0h1m10 0h1m9 0h1m9 0h1m9 0h1m10 0h1m9 0h1m9 0h1m9 0h1m10 0h1m9 0h1m9 0h1m9 0h1m10 0h1m9 0h1m9 0h1m9 0h1m10 0h1m9 0h1m9 0h1m9 0h1m10 0h1m9 0h1m9 0h1m9 0h1m10 0h1m9 0h1m9 0h1m9 0h1m10 0h1m9 0h1m9 0h1m9 0h1m10 0h1m9 0h1m9 0h1m9 0h1m10 0h1m9 0h1m9 0h1m9 0h1m10 0h1m9 0h1m9 0h1m9 0h1m10 0h1m9 0h1m9 0h1m9 0h1m10 0h1m9 0h1m9 0h1m9 0h1m10 0h1m9 0h1m9 0h1m9 0h1m10 0h1m9 0h1m9 0h1m9 0h1m10 0h1m9 0h1m9 0h1m9 0h1m10 0h1m9 0h1m9 0h1m9 0h1m10 0h1m9 0h1m9 0h1m9 0h1m10 0h1m9 0h1m9 0h1m9 0h1m10 0h1m9 0h1m9 0h1M0 116.5h1m9 0h1m9 0h1m10 0h1m9 0h1m9 0h1m9 0h1m10 0h1m9 0h1m9 0h1m9 0h1m10 0h1m9 0h1m9 0h1m9 0h1m10 0h1m9 0h1m9 0h1m9 0h1m10 0h1m9 0h1m9 0h1m9 0h1m10 0h1m9 0h1m9 0h1m9 0h1m10 0h1m9 0h1m9 0h1m9 0h1m10 0h1m9 0h1m9 0h1m9 0h1m10 0h1m9 0h1m9 0h1m9 0h1m10 0h1m9 0h1m9 0h1m9 0h1m10 0h1m9 0h1m9 0h1m9 0h1m10 0h1m9 0h1m9 0h1m9 0h1m10 0h1m9 0h1m9 0h1m9 0h1m10 0h1m9 0h1m9 0h1m9 0h1m10 0h1m9 0h1m9 0h1m9 0h1m10 0h1m9 0h1m9 0h1m9 0h1m10 0h1m9 0h1m9 0h1m9 0h1m10 0h1m9 0h1m9 0h1m9 0h1m10 0h1m9 0h1m9 0h1m9 0h1m10 0h1m9 0h1m9 0h1m9 0h1m10 0h1m9 0h1m9 0h1m9 0h1m10 0h1m9 0h1m9 0h1m9 0h1m10 0h1m9 0h1m9 0h1m9 0h1m10 0h1m9 0h1m9 0h1m9 0h1m10 0h1m9 0h1m9 0h1M0 105.5h1m9 0h1m9 0h1m10 0h1m9 0h1m9 0h1m9 0h1m10 0h1m9 0h1m9 0h1m9 0h1m10 0h1m9 0h1m9 0h1m9 0h1m10 0h1m9 0h1m9 0h1m9 0h1m10 0h1m9 0h1m9 0h1m9 0h1m10 0h1m9 0h1m9 0h1m9 0h1m10 0h1m9 0h1m9 0h1m9 0h1m10 0h1m9 0h1m9 0h1m9 0h1m10 0h1m9 0h1m9 0h1m9 0h1m10 0h1m9 0h1m9 0h1m9 0h1m10 0h1m9 0h1m9 0h1m9 0h1m10 0h1m9 0h1m9 0h1m9 0h1m10 0h1m9 0h1m9 0h1m9 0h1m10 0h1m9 0h1m9 0h1m9 0h1m10 0h1m9 0h1m9 0h1m9 0h1m10 0h1m9 0h1m9 0h1m9 0h1m10 0h1m9 0h1m9 0h1m9 0h1m10 0h1m9 0h1m9 0h1m9 0h1m10 0h1m9 0h1m9 0h1m9 0h1m10 0h1m9 0h1m9 0h1m9 0h1m10 0h1m9 0h1m9 0h1m9 0h1m10 0h1m9 0h1m9 0h1m9 0h1m10 0h1m9 0h1m9 0h1m9 0h1m10 0h1m9 0h1m9 0h1m9 0h1m10 0h1m9 0h1m9 0h1M0 95.5h1m9 0h1m9 0h1m10 0h1m9 0h1m9 0h1m9 0h1m10 0h1m9 0h1m9 0h1m9 0h1m10 0h1m9 0h1m9 0h1m9 0h1m10 0h1m9 0h1m9 0h1m9 0h1m10 0h1m9 0h1m9 0h1m9 0h1m10 0h1m9 0h1m9 0h1m9 0h1m10 0h1m9 0h1m9 0h1m9 0h1m10 0h1m9 0h1m9 0h1m9 0h1m10 0h1m9 0h1m9 0h1m9 0h1m10 0h1m9 0h1m9 0h1m9 0h1m10 0h1m9 0h1m9 0h1m9 0h1m10 0h1m9 0h1m9 0h1m9 0h1m10 0h1m9 0h1m9 0h1m9 0h1m10 0h1m9 0h1m9 0h1m9 0h1m10 0h1m9 0h1m9 0h1m9 0h1m10 0h1m9 0h1m9 0h1m9 0h1m10 0h1m9 0h1m9 0h1m9 0h1m10 0h1m9 0h1m9 0h1m9 0h1m10 0h1m9 0h1m9 0h1m9 0h1m10 0h1m9 0h1m9 0h1m9 0h1m10 0h1m9 0h1m9 0h1m9 0h1m10 0h1m9 0h1m9 0h1m9 0h1m10 0h1m9 0h1m9 0h1m9 0h1m10 0h1m9 0h1m9 0h1m9 0h1m10 0h1m9 0h1m9 0h1M0 85.5h1m9 0h1m9 0h1m10 0h1m9 0h1m9 0h1m9 0h1m10 0h1m9 0h1m9 0h1m9 0h1m10 0h1m9 0h1m9 0h1m9 0h1m10 0h1m9 0h1m9 0h1m9 0h1m10 0h1m9 0h1m9 0h1m9 0h1m10 0h1m9 0h1m9 0h1m9 0h1m10 0h1m9 0h1m9 0h1m9 0h1m10 0h1m9 0h1m9 0h1m9 0h1m10 0h1m9 0h1m9 0h1m9 0h1m10 0h1m9 0h1m9 0h1m9 0h1m10 0h1m9 0h1m9 0h1m9 0h1m10 0h1m9 0h1m9 0h1m9 0h1m10 0h1m9 0h1m9 0h1m9 0h1m10 0h1m9 0h1m9 0h1m9 0h1m10 0h1m9 0h1m9 0h1m9 0h1m10 0h1m9 0h1m9 0h1m9 0h1m10 0h1m9 0h1m9 0h1m9 0h1m10 0h1m9 0h1m9 0h1m9 0h1m10 0h1m9 0h1m9 0h1m9 0h1m10 0h1m9 0h1m9 0h1m9 0h1m10 0h1m9 0h1m9 0h1m9 0h1m10 0h1m9 0h1m9 0h1m9 0h1m10 0h1m9 0h1m9 0h1m9 0h1m10 0h1m9 0h1m9 0h1m9 0h1m10 0h1m9 0h1m9 0h1M0 75.5h1m9 0h1m9 0h1m10 0h1m9 0h1m9 0h1m9 0h1m10 0h1m9 0h1m9 0h1m9 0h1m10 0h1m9 0h1m9 0h1m9 0h1m10 0h1m9 0h1m9 0h1m9 0h1m10 0h1m9 0h1m9 0h1m9 0h1m10 0h1m9 0h1m9 0h1m9 0h1m10 0h1m9 0h1m9 0h1m9 0h1m10 0h1m9 0h1m9 0h1m9 0h1m10 0h1m9 0h1m9 0h1m9 0h1m10 0h1m9 0h1m9 0h1m9 0h1m10 0h1m9 0h1m9 0h1m9 0h1m10 0h1m9 0h1m9 0h1m9 0h1m10 0h1m9 0h1m9 0h1m9 0h1m10 0h1m9 0h1m9 0h1m9 0h1m10 0h1m9 0h1m9 0h1m9 0h1m10 0h1m9 0h1m9 0h1m9 0h1m10 0h1m9 0h1m9 0h1m9 0h1m10 0h1m9 0h1m9 0h1m9 0h1m10 0h1m9 0h1m9 0h1m9 0h1m10 0h1m9 0h1m9 0h1m9 0h1m10 0h1m9 0h1m9 0h1m9 0h1m10 0h1m9 0h1m9 0h1m9 0h1m10 0h1m9 0h1m9 0h1m9 0h1m10 0h1m9 0h1m9 0h1m9 0h1m10 0h1m9 0h1m9 0h1M0 64.5h1m9 0h1m9 0h1m10 0h1m9 0h1m9 0h1m9 0h1m10 0h1m9 0h1m9 0h1m9 0h1m10 0h1m9 0h1m9 0h1m9 0h1m10 0h1m9 0h1m9 0h1m9 0h1m10 0h1m9 0h1m9 0h1m9 0h1m10 0h1m9 0h1m9 0h1m9 0h1m10 0h1m9 0h1m9 0h1m9 0h1m10 0h1m9 0h1m9 0h1m9 0h1m10 0h1m9 0h1m9 0h1m9 0h1m10 0h1m9 0h1m9 0h1m9 0h1m10 0h1m9 0h1m9 0h1m9 0h1m10 0h1m9 0h1m9 0h1m9 0h1m10 0h1m9 0h1m9 0h1m9 0h1m10 0h1m9 0h1m9 0h1m9 0h1m10 0h1m9 0h1m9 0h1m9 0h1m10 0h1m9 0h1m9 0h1m9 0h1m10 0h1m9 0h1m9 0h1m9 0h1m10 0h1m9 0h1m9 0h1m9 0h1m10 0h1m9 0h1m9 0h1m9 0h1m10 0h1m9 0h1m9 0h1m9 0h1m10 0h1m9 0h1m9 0h1m9 0h1m10 0h1m9 0h1m9 0h1m9 0h1m10 0h1m9 0h1m9 0h1m9 0h1m10 0h1m9 0h1m9 0h1m9 0h1m10 0h1m9 0h1m9 0h1M0 54.5h1m9 0h1m9 0h1m10 0h1m9 0h1m9 0h1m9 0h1m10 0h1m9 0h1m9 0h1m9 0h1m10 0h1m9 0h1m9 0h1m9 0h1m10 0h1m9 0h1m9 0h1m9 0h1m10 0h1m9 0h1m9 0h1m9 0h1m10 0h1m9 0h1m9 0h1m9 0h1m10 0h1m9 0h1m9 0h1m9 0h1m10 0h1m9 0h1m9 0h1m9 0h1m10 0h1m9 0h1m9 0h1m9 0h1m10 0h1m9 0h1m9 0h1m9 0h1m10 0h1m9 0h1m9 0h1m9 0h1m10 0h1m9 0h1m9 0h1m9 0h1m10 0h1m9 0h1m9 0h1m9 0h1m10 0h1m9 0h1m9 0h1m9 0h1m10 0h1m9 0h1m9 0h1m9 0h1m10 0h1m9 0h1m9 0h1m9 0h1m10 0h1m9 0h1m9 0h1m9 0h1m10 0h1m9 0h1m9 0h1m9 0h1m10 0h1m9 0h1m9 0h1m9 0h1m10 0h1m9 0h1m9 0h1m9 0h1m10 0h1m9 0h1m9 0h1m9 0h1m10 0h1m9 0h1m9 0h1m9 0h1m10 0h1m9 0h1m9 0h1m9 0h1m10 0h1m9 0h1m9 0h1m9 0h1m10 0h1m9 0h1m9 0h1M0 44.5h1m9 0h1m9 0h1m10 0h1m9 0h1m9 0h1m9 0h1m10 0h1m9 0h1m9 0h1m9 0h1m10 0h1m9 0h1m9 0h1m9 0h1m10 0h1m9 0h1m9 0h1m9 0h1m10 0h1m9 0h1m9 0h1m9 0h1m10 0h1m9 0h1m9 0h1m9 0h1m10 0h1m9 0h1m9 0h1m9 0h1m10 0h1m9 0h1m9 0h1m9 0h1m10 0h1m9 0h1m9 0h1m9 0h1m10 0h1m9 0h1m9 0h1m9 0h1m10 0h1m9 0h1m9 0h1m9 0h1m10 0h1m9 0h1m9 0h1m9 0h1m10 0h1m9 0h1m9 0h1m9 0h1m10 0h1m9 0h1m9 0h1m9 0h1m10 0h1m9 0h1m9 0h1m9 0h1m10 0h1m9 0h1m9 0h1m9 0h1m10 0h1m9 0h1m9 0h1m9 0h1m10 0h1m9 0h1m9 0h1m9 0h1m10 0h1m9 0h1m9 0h1m9 0h1m10 0h1m9 0h1m9 0h1m9 0h1m10 0h1m9 0h1m9 0h1m9 0h1m10 0h1m9 0h1m9 0h1m9 0h1m10 0h1m9 0h1m9 0h1m9 0h1m10 0h1m9 0h1m9 0h1m9 0h1m10 0h1m9 0h1m9 0h1M0 34.5h1m9 0h1m9 0h1m10 0h1m9 0h1m9 0h1m9 0h1m10 0h1m9 0h1m9 0h1m9 0h1m10 0h1m9 0h1m9 0h1m9 0h1m10 0h1m9 0h1m9 0h1m9 0h1m10 0h1m9 0h1m9 0h1m9 0h1m10 0h1m9 0h1m9 0h1m9 0h1m10 0h1m9 0h1m9 0h1m9 0h1m10 0h1m9 0h1m9 0h1m9 0h1m10 0h1m9 0h1m9 0h1m9 0h1m10 0h1m9 0h1m9 0h1m9 0h1m10 0h1m9 0h1m9 0h1m9 0h1m10 0h1m9 0h1m9 0h1m9 0h1m10 0h1m9 0h1m9 0h1m9 0h1m10 0h1m9 0h1m9 0h1m9 0h1m10 0h1m9 0h1m9 0h1m9 0h1m10 0h1m9 0h1m9 0h1m9 0h1m10 0h1m9 0h1m9 0h1m9 0h1m10 0h1m9 0h1m9 0h1m9 0h1m10 0h1m9 0h1m9 0h1m9 0h1m10 0h1m9 0h1m9 0h1m9 0h1m10 0h1m9 0h1m9 0h1m9 0h1m10 0h1m9 0h1m9 0h1m9 0h1m10 0h1m9 0h1m9 0h1m9 0h1m10 0h1m9 0h1m9 0h1m9 0h1m10 0h1m9 0h1m9 0h1M0 23.5h1m9 0h1m9 0h1m10 0h1m9 0h1m9 0h1m9 0h1m10 0h1m9 0h1m9 0h1m9 0h1m10 0h1m9 0h1m9 0h1m9 0h1m10 0h1m9 0h1m9 0h1m9 0h1m10 0h1m9 0h1m9 0h1m9 0h1m10 0h1m9 0h1m9 0h1m9 0h1m10 0h1m9 0h1m9 0h1m9 0h1m10 0h1m9 0h1m9 0h1m9 0h1m10 0h1m9 0h1m9 0h1m9 0h1m10 0h1m9 0h1m9 0h1m9 0h1m10 0h1m9 0h1m9 0h1m9 0h1m10 0h1m9 0h1m9 0h1m9 0h1m10 0h1m9 0h1m9 0h1m9 0h1m10 0h1m9 0h1m9 0h1m9 0h1m10 0h1m9 0h1m9 0h1m9 0h1m10 0h1m9 0h1m9 0h1m9 0h1m10 0h1m9 0h1m9 0h1m9 0h1m10 0h1m9 0h1m9 0h1m9 0h1m10 0h1m9 0h1m9 0h1m9 0h1m10 0h1m9 0h1m9 0h1m9 0h1m10 0h1m9 0h1m9 0h1m9 0h1m10 0h1m9 0h1m9 0h1m9 0h1m10 0h1m9 0h1m9 0h1m9 0h1m10 0h1m9 0h1m9 0h1m9 0h1m10 0h1m9 0h1m9 0h1M0 13.5h1m9 0h1m9 0h1m10 0h1m9 0h1m9 0h1m9 0h1m10 0h1m9 0h1m9 0h1m9 0h1m10 0h1m9 0h1m9 0h1m9 0h1m10 0h1m9 0h1m9 0h1m9 0h1m10 0h1m9 0h1m9 0h1m9 0h1m10 0h1m9 0h1m9 0h1m9 0h1m10 0h1m9 0h1m9 0h1m9 0h1m10 0h1m9 0h1m9 0h1m9 0h1m10 0h1m9 0h1m9 0h1m9 0h1m10 0h1m9 0h1m9 0h1m9 0h1m10 0h1m9 0h1m9 0h1m9 0h1m10 0h1m9 0h1m9 0h1m9 0h1m10 0h1m9 0h1m9 0h1m9 0h1m10 0h1m9 0h1m9 0h1m9 0h1m10 0h1m9 0h1m9 0h1m9 0h1m10 0h1m9 0h1m9 0h1m9 0h1m10 0h1m9 0h1m9 0h1m9 0h1m10 0h1m9 0h1m9 0h1m9 0h1m10 0h1m9 0h1m9 0h1m9 0h1m10 0h1m9 0h1m9 0h1m9 0h1m10 0h1m9 0h1m9 0h1m9 0h1m10 0h1m9 0h1m9 0h1m9 0h1m10 0h1m9 0h1m9 0h1m9 0h1m10 0h1m9 0h1m9 0h1m9 0h1m10 0h1m9 0h1m9 0h1M0 3.5h1m9 0h1m9 0h1m10 0h1m9 0h1m9 0h1m9 0h1m10 0h1m9 0h1m9 0h1m9 0h1m10 0h1m9 0h1m9 0h1m9 0h1m10 0h1m9 0h1m9 0h1m9 0h1m10 0h1m9 0h1m9 0h1m9 0h1m10 0h1m9 0h1m9 0h1m9 0h1m10 0h1m9 0h1m9 0h1m9 0h1m10 0h1m9 0h1m9 0h1m9 0h1m10 0h1m9 0h1m9 0h1m9 0h1m10 0h1m9 0h1m9 0h1m9 0h1m10 0h1m9 0h1m9 0h1m9 0h1m10 0h1m9 0h1m9 0h1m9 0h1m10 0h1m9 0h1m9 0h1m9 0h1m10 0h1m9 0h1m9 0h1m9 0h1m10 0h1m9 0h1m9 0h1m9 0h1m10 0h1m9 0h1m9 0h1m9 0h1m10 0h1m9 0h1m9 0h1m9 0h1m10 0h1m9 0h1m9 0h1m9 0h1m10 0h1m9 0h1m9 0h1m9 0h1m10 0h1m9 0h1m9 0h1m9 0h1m10 0h1m9 0h1m9 0h1m9 0h1m10 0h1m9 0h1m9 0h1m9 0h1m10 0h1m9 0h1m9 0h1m9 0h1m10 0h1m9 0h1m9 0h1m9 0h1m10 0h1m9 0h1m9 0h1" stroke="#4b4b4b" stroke-width="1" fill="none" shape-rendering="crispEdges"/><rect x="51.58" y="116.05" width="922.50" height="358.75" rx="20.50" stroke="#fff" stroke-width="2.5" fill="none"/><path d="M31.08 474.5H72.08 M51.5 454.30V495.30" stroke="#c81010" stroke-width="1" fill="none"/><path d="M138.30 172.22H262.12" stroke="#b4b4b4" stroke-width="1.5" fill="none" stroke-dasharray="9.0 2.8 1.2 2.8" stroke-dashoffset="5.79"/><path d="M262.12 244.38H138.30" stroke="#b4b4b4" stroke-width="1.5" fill="none" stroke-dasharray="9.0 2.8 1.2 2.8" stroke-dashoffset="5.79"/><path d="M262.12 172.22A36.08 36.08 0 0 1 262.12 244.38" stroke="#b4b4b4" stroke-width="1.5" fill="none" stroke-dasharray="9.0 2.8 1.2 2.8" stroke-dashoffset="11.03"/><path d="M138.30 244.38A36.08 36.08 0 0 1 138.30 172.22" stroke="#b4b4b4" stroke-width="1.5" fill="none" stroke-dasharray="9.0 2.8 1.2 2.8" stroke-dashoffset="11.03"/><circle cx="138.71" cy="208.30" r="8.20" stroke="#fff" stroke-width="2.5" fill="none"/><circle cx="261.71" cy="208.30" r="8.20" stroke="#fff" stroke-width="2.5" fill="none"/><path d="M151.36 194.11Q150.39 182.88 161.67 182.88L238.74 182.88Q250.02 182.88 249.05 194.11L246.58 222.90Q245.61 234.13 234.34 234.13L166.07 234.13Q154.80 234.13 153.83 222.90Z" stroke="#fff" stroke-width="2.5" fill="none"/><circle cx="374.46" cy="208.30" r="38.95" stroke="#fff" stroke-width="2.5" fill="none"/><circle cx="482.08" cy="208.30" r="17.84" stroke="#fff" stroke-width="2.5" fill="none"/><path d="M155.52 317.56H398.64" stroke="#b4b4b4" stroke-width="1.5" fill="none" stroke-dasharray="9.0 2.8 1.2 2.8" stroke-dashoffset="1.44"/><path d="M398.64 427.03H155.52" stroke="#b4b4b4" stroke-width="1.5" fill="none" stroke-dasharray="9.0 2.8 1.2 2.8" stroke-dashoffset="1.44"/><path d="M398.64 317.56A54.73 54.73 0 0 1 398.64 427.03" stroke="#b4b4b4" stroke-width="1.5" fill="none" stroke-dasharray="9.0 2.8 1.2 2.8" stroke-dashoffset="13.32"/><path d="M155.52 427.03A54.73 54.73 0 0 1 155.52 317.56" stroke="#b4b4b4" stroke-width="1.5" fill="none" stroke-dasharray="9.0 2.8 1.2 2.8" stroke-dashoffset="13.32"/><circle cx="139.32" cy="372.30" r="16.09" stroke="#fff" stroke-width="2.5" fill="none"/><circle cx="414.84" cy="372.30" r="16.09" stroke="#fff" stroke-width="2.5" fill="none"/><path d="M192.83 339.50 L361.44 339.50 L361.44 389.72 L344.73 389.72 L331.20 405.20 L222.65 405.20 L209.43 389.72 L192.83 389.72Z" stroke="#fff" stroke-width="2.5" fill="none"/><path d="M91.90 208.30H308.20" stroke="#e41212" stroke-width="1.8" fill="none" stroke-dasharray="16.6 7.05 1.5 7.05" stroke-dashoffset="12.85"/><path d="M200.21 259.80V156.10" stroke="#e41212" stroke-width="1.8" fill="none" stroke-dasharray="16.6 7.05 1.5 7.05" stroke-dashoffset="4.75"/><path d="M322.10 208.30H431.10" stroke="#e41212" stroke-width="1.8" fill="none" stroke-dasharray="16.6 7.05 1.5 7.05" stroke-dashoffset="0.00"/><path d="M374.46 259.30V156.10" stroke="#e41212" stroke-width="1.8" fill="none" stroke-dasharray="16.6 7.05 1.5 7.05" stroke-dashoffset="5.00"/><path d="M450.30 208.30H513.00" stroke="#e41212" stroke-width="1.8" fill="none" stroke-dasharray="16.6 7.05 1.5 7.05" stroke-dashoffset="9.15"/><path d="M482.08 239.30V176.70" stroke="#e41212" stroke-width="1.8" fill="none" stroke-dasharray="16.6 7.05 1.5 7.05" stroke-dashoffset="9.20"/><path d="M81.30 372.30H471.70" stroke="#e41212" stroke-width="1.8" fill="none" stroke-dasharray="16.6 7.05 1.5 7.05" stroke-dashoffset="6.30"/><path d="M277.08 443.60V299.50" stroke="#e41212" stroke-width="1.8" fill="none" stroke-dasharray="16.6 7.05 1.5 7.05" stroke-dashoffset="0.65"/><path d="M750.30 366.90H935.50" stroke="#e41212" stroke-width="1.8" fill="none" stroke-dasharray="16.6 7.05 1.5 7.05" stroke-dashoffset="12.30"/><path d="M843.20 437.00V289.00" stroke="#e41212" stroke-width="1.8" fill="none" stroke-dasharray="16.6 7.05 1.5 7.05" stroke-dashoffset="14.80"/><rect x="764.47" y="310.80" width="159.90" height="112.75" rx="17.94" stroke="#fff" stroke-width="2.5" fill="none"/><defs><g id="vt" stroke="#5cb2d8" stroke-width="0.7" fill="#0682b2"><rect x="-4.95" y="-12.23" width="9.9" height="9.9"/><rect x="-12.23" y="-4.95" width="9.9" height="9.9"/><rect x="2.33" y="-4.95" width="9.9" height="9.9"/><rect x="-4.95" y="2.33" width="9.9" height="9.9"/><rect x="-2.2" y="-2.2" width="4.4" height="4.4" fill="#0000c4" stroke="none"/></g></defs><use href="#vt" x="574.33" y="177.55"/><use href="#vt" x="605.08" y="177.55"/><use href="#vt" x="635.83" y="177.55"/><use href="#vt" x="666.58" y="177.55"/><use href="#vt" x="697.33" y="177.55"/><use href="#vt" x="728.08" y="177.55"/><use href="#vt" x="758.83" y="177.55"/><use href="#vt" x="789.58" y="177.55"/><use href="#vt" x="820.33" y="177.55"/><use href="#vt" x="851.08" y="177.55"/><use href="#vt" x="881.83" y="177.55"/><use href="#vt" x="912.58" y="177.55"/><use href="#vt" x="589.71" y="198.05"/><use href="#vt" x="620.46" y="198.05"/><use href="#vt" x="651.21" y="198.05"/><use href="#vt" x="681.96" y="198.05"/><use href="#vt" x="712.71" y="198.05"/><use href="#vt" x="743.46" y="198.05"/><use href="#vt" x="774.21" y="198.05"/><use href="#vt" x="804.96" y="198.05"/><use href="#vt" x="835.71" y="198.05"/><use href="#vt" x="866.46" y="198.05"/><use href="#vt" x="897.21" y="198.05"/><use href="#vt" x="574.33" y="218.55"/><use href="#vt" x="605.08" y="218.55"/><use href="#vt" x="635.83" y="218.55"/><use href="#vt" x="666.58" y="218.55"/><use href="#vt" x="697.33" y="218.55"/><use href="#vt" x="728.08" y="218.55"/><use href="#vt" x="758.83" y="218.55"/><use href="#vt" x="789.58" y="218.55"/><use href="#vt" x="820.33" y="218.55"/><use href="#vt" x="851.08" y="218.55"/><use href="#vt" x="881.83" y="218.55"/><use href="#vt" x="912.58" y="218.55"/><use href="#vt" x="589.71" y="239.05"/><use href="#vt" x="620.46" y="239.05"/><use href="#vt" x="651.21" y="239.05"/><use href="#vt" x="681.96" y="239.05"/><use href="#vt" x="712.71" y="239.05"/><use href="#vt" x="743.46" y="239.05"/><use href="#vt" x="774.21" y="239.05"/><use href="#vt" x="804.96" y="239.05"/><use href="#vt" x="835.71" y="239.05"/><use href="#vt" x="866.46" y="239.05"/><use href="#vt" x="897.21" y="239.05"/><use href="#vt" x="574.33" y="259.55"/><use href="#vt" x="605.08" y="259.55"/><use href="#vt" x="635.83" y="259.55"/><use href="#vt" x="666.58" y="259.55"/><use href="#vt" x="697.33" y="259.55"/><use href="#vt" x="728.08" y="259.55"/><use href="#vt" x="758.83" y="259.55"/><use href="#vt" x="789.58" y="259.55"/><use href="#vt" x="820.33" y="259.55"/><use href="#vt" x="851.08" y="259.55"/><use href="#vt" x="881.83" y="259.55"/><use href="#vt" x="912.58" y="259.55"/><use href="#vt" x="589.71" y="280.05"/><use href="#vt" x="620.46" y="280.05"/><use href="#vt" x="651.21" y="280.05"/><use href="#vt" x="681.96" y="280.05"/><use href="#vt" x="712.71" y="280.05"/><use href="#vt" x="743.46" y="280.05"/><use href="#vt" x="774.21" y="280.05"/><use href="#vt" x="804.96" y="280.05"/><use href="#vt" x="835.71" y="280.05"/><use href="#vt" x="866.46" y="280.05"/><use href="#vt" x="897.21" y="280.05"/><use href="#vt" x="574.33" y="300.55"/><use href="#vt" x="605.08" y="300.55"/><use href="#vt" x="635.83" y="300.55"/><use href="#vt" x="666.58" y="300.55"/><use href="#vt" x="697.33" y="300.55"/><use href="#vt" x="728.08" y="300.55"/><use href="#vt" x="589.71" y="321.05"/><use href="#vt" x="620.46" y="321.05"/><use href="#vt" x="651.21" y="321.05"/><use href="#vt" x="681.96" y="321.05"/><use href="#vt" x="712.71" y="321.05"/><use href="#vt" x="574.33" y="341.55"/><use href="#vt" x="605.08" y="341.55"/><use href="#vt" x="635.83" y="341.55"/><use href="#vt" x="666.58" y="341.55"/><use href="#vt" x="697.33" y="341.55"/><use href="#vt" x="728.08" y="341.55"/><use href="#vt" x="589.71" y="362.05"/><use href="#vt" x="620.46" y="362.05"/><use href="#vt" x="651.21" y="362.05"/><use href="#vt" x="681.96" y="362.05"/><use href="#vt" x="712.71" y="362.05"/><use href="#vt" x="574.33" y="382.55"/><use href="#vt" x="605.08" y="382.55"/><use href="#vt" x="635.83" y="382.55"/><use href="#vt" x="666.58" y="382.55"/><use href="#vt" x="697.33" y="382.55"/><use href="#vt" x="728.08" y="382.55"/><use href="#vt" x="589.71" y="403.05"/><use href="#vt" x="620.46" y="403.05"/><use href="#vt" x="651.21" y="403.05"/><use href="#vt" x="681.96" y="403.05"/><use href="#vt" x="712.71" y="403.05"/><use href="#vt" x="574.33" y="423.55"/><use href="#vt" x="605.08" y="423.55"/><use href="#vt" x="635.83" y="423.55"/><use href="#vt" x="666.58" y="423.55"/><use href="#vt" x="697.33" y="423.55"/><use href="#vt" x="728.08" y="423.55"/><path d="M553.5 0V577" stroke="#a07a0e" stroke-width="1" stroke-dasharray="4 2.5" fill="none"/><path d="M0 443.5H1043" stroke="#a07a0e" stroke-width="1" stroke-dasharray="4 2.5" fill="none"/><g fill="none"><circle cx="553.3" cy="443" r="31" stroke="#2e3a46" stroke-width="2.5" opacity="0.55"/><circle cx="553.3" cy="443" r="33.5" stroke="#4a5a6a" stroke-width="2.5" opacity="0.6"/><circle cx="553.3" cy="443" r="36" stroke="#66788a" stroke-width="2.5" opacity="0.7"/><circle cx="553.3" cy="443" r="38.3" stroke="#8a9cae" stroke-width="2" opacity="0.75"/><circle cx="553.3" cy="443" r="39.8" stroke="#5a6a7a" stroke-width="1" opacity="0.5"/></g><path d="M537.5 443H569 M553.3 427.5V459" stroke="#c4c4c4" stroke-width="3.4"/><circle cx="553.3" cy="443" r="5.2" fill="none" stroke="#d01010" stroke-width="1" stroke-dasharray="2 1.5"/><text x="561.3" y="462" font-size="13.7" font-family="Liberation Sans" fill="#e8b41e">Grille</text></svg>
<div class="a" style="left:1155px;top:107px;width:300px;height:691px;background:#e6e6e6;border-left:1px solid #cfcfcf"></div>
<div class="a" style="left:1155px;top:107px;width:300px;height:24px;background:linear-gradient(#ececec,#e0e0e0);border-top:1px solid #cacaca"></div>
<svg class="a" style="left:1156px;top:110px;" width="36" height="17" viewBox="0 0 36 17"><circle cx="8" cy="8.5" r="7" fill="#7b7b7b"/><path d="M5.2 5.7 L10.8 11.3 M10.8 5.7 L5.2 11.3" stroke="#fff" stroke-width="1.8"/><circle cx="25.8" cy="8.5" r="7" fill="#7b7b7b"/><rect x="22.5" y="7" width="5.5" height="4.5" fill="none" stroke="#fff" stroke-width="1.1"/><path d="M24 7 V5.2 H29.5 V9.7 H28" fill="none" stroke="#fff" stroke-width="1.1"/></svg>
<div class="a" style="left:1262px;top:111.5px;width:120px;text-align:center;font-size:12.1px;color:#2a2a2a">Liste des calques</div>
<div class="a" style="left:1155.4px;top:130.8px;width:59.5px;height:25px;background:linear-gradient(#f6f6f6,#e9e9e9);border:1px solid #c2c2c2"></div>
<div class="a" style="left:1214.6px;top:130.8px;width:59.5px;height:25px;background:linear-gradient(#f6f6f6,#e9e9e9);border:1px solid #c2c2c2"></div>
<div class="a" style="left:1275.6px;top:130.8px;width:59.5px;height:25px;background:linear-gradient(#f6f6f6,#e9e9e9);border:1px solid #c2c2c2"></div>
<div class="a" style="left:1335.5px;top:130.8px;width:59.5px;height:25px;background:linear-gradient(#f6f6f6,#e9e9e9);border:1px solid #c2c2c2"></div>
<div class="a" style="left:1395.7px;top:130.8px;width:59.5px;height:25px;background:linear-gradient(#f6f6f6,#e9e9e9);border:1px solid #c2c2c2"></div>
<svg class="a" style="left:1177px;top:136px;" width="17" height="14" viewBox="0 0 17 14"><path d="M1 7 Q8 -0.5 15 7 Q8 14.5 1 7 Z" fill="#000"/><ellipse cx="8" cy="7" rx="3.6" ry="3.6" fill="#fff"/><circle cx="8" cy="7.3" r="2.2" fill="#000"/><path d="M0.5 6.5 Q8 -2 15.5 6.5" fill="none" stroke="#000" stroke-width="1.4"/></svg>
<svg class="a" style="left:1236.6px;top:136px;" width="17" height="14" viewBox="0 0 17 14"><path d="M1 7 Q8 -0.5 15 7 Q8 14.5 1 7 Z" fill="#b4b4b4"/><ellipse cx="8" cy="7" rx="3.6" ry="3.6" fill="#fff"/><circle cx="8" cy="7.3" r="2.2" fill="#b4b4b4"/><path d="M0.5 6.5 Q8 -2 15.5 6.5" fill="none" stroke="#b4b4b4" stroke-width="1.4"/></svg>
<svg class="a" style="left:1297px;top:135px;" width="15" height="15" viewBox="0 0 15 15"><path d="M7.5 1.5 v12 M1.5 7.5 h12" stroke="#e01010" stroke-width="3.4"/></svg>
<svg class="a" style="left:1357px;top:135px;" width="15" height="15" viewBox="0 0 15 15"><path d="M1.5 7.5 h12" stroke="#e01010" stroke-width="3.4"/></svg>
<svg class="a" style="left:1417px;top:134px;" width="16" height="16" viewBox="0 0 16 16"><path d="M1.5 14.5 L3 10 L12 1.5 L14.5 4 L5.5 12.5 Z" fill="#e8b040" stroke="#8a5a10" stroke-width="0.7"/><path d="M12 1.5 L13.2 0.5 L15.5 2.8 L14.5 4 Z" fill="#e05050"/><path d="M1.5 14.5 L3 10 L5.5 12.5 Z" fill="#f0d8a8"/><path d="M1.5 14.5 L2.2 12.5 L3.5 13.8 Z" fill="#333"/></svg>
<div class="a" style="left:1155.5px;top:156.5px;width:299px;height:641.5px;background:#fff;border-left:1px solid #d4d4d4;border-top:1px solid #d8d8d8"></div>
<div class="a" style="left:1161px;top:162.5px;width:16px;height:9.5px;background:#000;border:1px solid #333"></div>
<div class="a" style="left:1183px;top:158.5px;font-size:13.5px;color:#111">0</div>
<svg class="a" style="left:1415px;top:161px;" width="17" height="13" viewBox="0 0 17 13"><path d="M1 7 Q8 -0.5 15 7 Q8 14.5 1 7 Z" fill="#000"/><ellipse cx="8" cy="7" rx="3.6" ry="3.6" fill="#fff"/><circle cx="8" cy="7.3" r="2.2" fill="#000"/><path d="M0.5 6.5 Q8 -2 15.5 6.5" fill="none" stroke="#000" stroke-width="1.4"/></svg>
<svg class="a" style="left:1438.5px;top:159px;" width="14" height="17" viewBox="0 0 14 17"><path d="M3.5 8 V5.5 A3.5 3.5 0 0 1 10.5 5.5 V8" fill="none" stroke="#c8c8c8" stroke-width="1.7"/><rect x="1.5" y="8" width="11" height="8" rx="1" fill="#c8c8c8"/></svg>
<div class="a" style="left:1161px;top:182.5px;width:16px;height:9.5px;background:#f00;border:1px solid #333"></div>
<div class="a" style="left:1183px;top:178.5px;font-size:13.5px;color:#111">Centre</div>
<svg class="a" style="left:1415px;top:181px;" width="17" height="13" viewBox="0 0 17 13"><path d="M1 7 Q8 -0.5 15 7 Q8 14.5 1 7 Z" fill="#000"/><ellipse cx="8" cy="7" rx="3.6" ry="3.6" fill="#fff"/><circle cx="8" cy="7.3" r="2.2" fill="#000"/><path d="M0.5 6.5 Q8 -2 15.5 6.5" fill="none" stroke="#000" stroke-width="1.4"/></svg>
<svg class="a" style="left:1438.5px;top:179px;" width="14" height="17" viewBox="0 0 14 17"><path d="M3.5 8 V5.5 A3.5 3.5 0 0 1 10.5 5.5 V8" fill="none" stroke="#c8c8c8" stroke-width="1.7"/><rect x="1.5" y="8" width="11" height="8" rx="1" fill="#c8c8c8"/></svg>
<div class="a" style="left:1161px;top:202.5px;width:16px;height:9.5px;background:#a8a8aa;border:1px solid #333"></div>
<div class="a" style="left:1183px;top:198.5px;font-size:13.5px;color:#111">Retour</div>
<svg class="a" style="left:1415px;top:201px;" width="17" height="13" viewBox="0 0 17 13"><path d="M1 7 Q8 -0.5 15 7 Q8 14.5 1 7 Z" fill="#000"/><ellipse cx="8" cy="7" rx="3.6" ry="3.6" fill="#fff"/><circle cx="8" cy="7.3" r="2.2" fill="#000"/><path d="M0.5 6.5 Q8 -2 15.5 6.5" fill="none" stroke="#000" stroke-width="1.4"/></svg>
<svg class="a" style="left:1438.5px;top:199px;" width="14" height="17" viewBox="0 0 14 17"><path d="M3.5 8 V5.5 A3.5 3.5 0 0 1 10.5 5.5 V8" fill="none" stroke="#c8c8c8" stroke-width="1.7"/><rect x="1.5" y="8" width="11" height="8" rx="1" fill="#c8c8c8"/></svg>
<div class="a" style="left:1161px;top:222.5px;width:16px;height:9.5px;background:#000;border:1px solid #333"></div>
<div class="a" style="left:1183px;top:218.5px;font-size:13.5px;color:#111">Ventilation</div>
<svg class="a" style="left:1415px;top:221px;" width="17" height="13" viewBox="0 0 17 13"><path d="M1 7 Q8 -0.5 15 7 Q8 14.5 1 7 Z" fill="#000"/><ellipse cx="8" cy="7" rx="3.6" ry="3.6" fill="#fff"/><circle cx="8" cy="7.3" r="2.2" fill="#000"/><path d="M0.5 6.5 Q8 -2 15.5 6.5" fill="none" stroke="#000" stroke-width="1.4"/></svg>
<svg class="a" style="left:1438.5px;top:219px;" width="14" height="17" viewBox="0 0 14 17"><path d="M3.5 8 V5.5 A3.5 3.5 0 0 1 10.5 5.5 V8" fill="none" stroke="#c8c8c8" stroke-width="1.7"/><rect x="1.5" y="8" width="11" height="8" rx="1" fill="#c8c8c8"/></svg>
<svg class="a" style="left:1393.5px;top:199px;" width="16" height="16" viewBox="0 0 16 16"><path d="M1.5 14.5 L3 10 L12 1.5 L14.5 4 L5.5 12.5 Z" fill="#e8b040" stroke="#8a5a10" stroke-width="0.7"/><path d="M12 1.5 L13.2 0.5 L15.5 2.8 L14.5 4 Z" fill="#e05050"/><path d="M1.5 14.5 L3 10 L5.5 12.5 Z" fill="#f0d8a8"/><path d="M1.5 14.5 L2.2 12.5 L3.5 13.8 Z" fill="#333"/></svg>
<div class="a" style="left:1455px;top:107px;width:45px;height:691px;background:linear-gradient(90deg,#f2f2f2,#dedede 55%,#c9c9c9);border-left:1px solid #d0d0d0"></div>
<svg class="a" style="left:1455px;top:113px" width="45" height="8"><rect x="8" y="3" width="1.5" height="1.5" fill="#a0a0a0"/><rect x="14" y="3" width="1.5" height="1.5" fill="#a0a0a0"/><rect x="20" y="3" width="1.5" height="1.5" fill="#a0a0a0"/><rect x="26" y="3" width="1.5" height="1.5" fill="#a0a0a0"/><rect x="32" y="3" width="1.5" height="1.5" fill="#a0a0a0"/><rect x="38" y="3" width="1.5" height="1.5" fill="#a0a0a0"/></svg>
<svg class="a" style="left:1455px;top:259.6px" width="45" height="4"><rect x="2" y="1.5" width="1.5" height="1.2" fill="#8a8a8a"/><rect x="6" y="1.5" width="1.5" height="1.2" fill="#8a8a8a"/><rect x="10" y="1.5" width="1.5" height="1.2" fill="#8a8a8a"/><rect x="14" y="1.5" width="1.5" height="1.2" fill="#8a8a8a"/><rect x="18" y="1.5" width="1.5" height="1.2" fill="#8a8a8a"/><rect x="22" y="1.5" width="1.5" height="1.2" fill="#8a8a8a"/><rect x="26" y="1.5" width="1.5" height="1.2" fill="#8a8a8a"/><rect x="30" y="1.5" width="1.5" height="1.2" fill="#8a8a8a"/><rect x="34" y="1.5" width="1.5" height="1.2" fill="#8a8a8a"/><rect x="38" y="1.5" width="1.5" height="1.2" fill="#8a8a8a"/><rect x="42" y="1.5" width="1.5" height="1.2" fill="#8a8a8a"/></svg>
<svg class="a" style="left:1455px;top:407.4px" width="45" height="4"><rect x="2" y="1.5" width="1.5" height="1.2" fill="#8a8a8a"/><rect x="6" y="1.5" width="1.5" height="1.2" fill="#8a8a8a"/><rect x="10" y="1.5" width="1.5" height="1.2" fill="#8a8a8a"/><rect x="14" y="1.5" width="1.5" height="1.2" fill="#8a8a8a"/><rect x="18" y="1.5" width="1.5" height="1.2" fill="#8a8a8a"/><rect x="22" y="1.5" width="1.5" height="1.2" fill="#8a8a8a"/><rect x="26" y="1.5" width="1.5" height="1.2" fill="#8a8a8a"/><rect x="30" y="1.5" width="1.5" height="1.2" fill="#8a8a8a"/><rect x="34" y="1.5" width="1.5" height="1.2" fill="#8a8a8a"/><rect x="38" y="1.5" width="1.5" height="1.2" fill="#8a8a8a"/><rect x="42" y="1.5" width="1.5" height="1.2" fill="#8a8a8a"/></svg>
<div class="a" style="left:1456.5px;top:121px;width:43.5px;height:40.7px;background:#bdbdbd;border-radius:6px 0 0 6px"></div>
<div class="a" style="left:1456.5px;top:417px;width:43.5px;height:42.7px;background:#bdbdbd;border-radius:6px 0 0 6px"></div>
<svg class="a" style="left:1462.5px;top:126.5px;" width="29" height="29" viewBox="0 0 29 29"><rect x="0.5" y="0.5" width="27.5" height="27.5" fill="#fff" stroke="#222" stroke-width="1"/><rect x="0.5" y="0.5" width="27.5" height="5.5" fill="#000"/><rect x="2" y="1.5" width="3.5" height="3.5" fill="#fff"/><path d="M7 11 L14 9 L14 22 L7 24 Z" fill="#ddd" stroke="#555" stroke-width="0.6"/><path d="M10 10 L17 8 L17 21 L10 23 Z" fill="#eee" stroke="#555" stroke-width="0.6"/><path d="M13 9 L21 7 L21 20 L13 22 Z" fill="#f4f4f4" stroke="#555" stroke-width="0.6"/><path d="M15 18 L18 12 L19 18 Z" fill="none" stroke="#e04040" stroke-width="0.8"/></svg>
<svg class="a" style="left:1462.5px;top:173.5px;" width="29" height="29" viewBox="0 0 29 29"><rect x="0.5" y="0.5" width="27.5" height="27.5" fill="#fff" stroke="#222" stroke-width="1"/><rect x="0.5" y="0.5" width="27.5" height="5.5" fill="#000"/><rect x="2" y="1.5" width="3.5" height="3.5" fill="#fff"/><rect x="6" y="10.5" width="12" height="9" fill="#f8eec0" stroke="#777" stroke-width="0.7"/><circle cx="17" cy="19" r="4.8" fill="#f8eec0" stroke="#777" stroke-width="0.7"/></svg>
<svg class="a" style="left:1462.5px;top:219.5px;" width="29" height="29" viewBox="0 0 29 29"><rect x="0.5" y="0.5" width="27.5" height="27.5" fill="#fff" stroke="#222" stroke-width="1"/><rect x="0.5" y="0.5" width="27.5" height="5.5" fill="#000"/><rect x="2" y="1.5" width="3.5" height="3.5" fill="#fff"/><rect x="5" y="11" width="18.5" height="12" rx="2" fill="#f2f4f8" stroke="#c4d0e0" stroke-width="0.8"/></svg>
<svg class="a" style="left:1462.5px;top:275.8px;" width="29" height="29" viewBox="0 0 29 29"><rect x="0.5" y="0.5" width="27.5" height="27.5" fill="#fff" stroke="#222" stroke-width="1"/><rect x="0.5" y="0.5" width="27.5" height="5.5" fill="#000"/><rect x="2" y="1.5" width="3.5" height="3.5" fill="#fff"/><g fill="#000"><rect x="4" y="8.5" width="4" height="3"/><rect x="4" y="14.5" width="4" height="3"/><rect x="4" y="20.5" width="4" height="3"/></g><g fill="none" stroke="#555" stroke-width="0.7"><rect x="10" y="8.5" width="14" height="3"/><rect x="10" y="14.5" width="14" height="3"/><rect x="10" y="20.5" width="14" height="3"/></g></svg>
<svg class="a" style="left:1462.5px;top:321.5px;" width="29" height="29" viewBox="0 0 29 29"><rect x="0.5" y="0.5" width="27.5" height="27.5" fill="#fff" stroke="#222" stroke-width="1"/><rect x="0.5" y="0.5" width="27.5" height="5.5" fill="#000"/><rect x="2" y="1.5" width="3.5" height="3.5" fill="#fff"/><path d="M6 10 Q14 7 22 10 L16 17 L16 24 L13 23 L13 17 Z" fill="#b8b8b8" stroke="#444" stroke-width="0.7"/></svg>
<svg class="a" style="left:1462.5px;top:367.5px;" width="29" height="29" viewBox="0 0 29 29"><rect x="0.5" y="0.5" width="27.5" height="27.5" fill="#fff" stroke="#222" stroke-width="1"/><rect x="0.5" y="0.5" width="27.5" height="5.5" fill="#000"/><rect x="2" y="1.5" width="3.5" height="3.5" fill="#fff"/><path d="M6 10 L11 13 L11 21 L6 24 Z" fill="#fff" stroke="#444" stroke-width="0.8"/><rect x="11" y="13" width="10" height="8" fill="#9a9a9a" stroke="#444" stroke-width="0.6"/><path d="M4 17 H25" stroke="#f0a0a0" stroke-width="0.6" stroke-dasharray="1 1"/></svg>
<svg class="a" style="left:1462.5px;top:423.5px;" width="29" height="29" viewBox="0 0 29 29"><rect x="0.5" y="0.5" width="27.5" height="27.5" fill="#fff" stroke="#222" stroke-width="1"/><rect x="0.5" y="0.5" width="27.5" height="5.5" fill="#000"/><rect x="2" y="1.5" width="3.5" height="3.5" fill="#fff"/><g stroke="#999" stroke-width="0.6"><path d="M3 10 h10 M3 13 h12 M3 16 h11 M3 19 h12"/></g><path d="M0.5 23 H28" stroke="#444" stroke-width="0.6"/><path d="M3 26 h2 M9 26 h15" stroke="#444" stroke-width="0.8"/></svg>
<svg class="a" style="left:1462.5px;top:470.5px;" width="29" height="29" viewBox="0 0 29 29"><rect x="0.5" y="0.5" width="27.5" height="27.5" fill="#fff" stroke="#222" stroke-width="1"/><rect x="0.5" y="0.5" width="27.5" height="5.5" fill="#000"/><rect x="2" y="1.5" width="3.5" height="3.5" fill="#fff"/><rect x="7.5" y="9" width="13" height="16" rx="1" fill="#b8802a"/><rect x="9.5" y="11.5" width="9" height="11.5" fill="#f4f4f4"/><path d="M11 15h6M11 17h6M11 19h5" stroke="#bbb" stroke-width="0.6"/><rect x="11" y="7.5" width="6" height="3" rx="0.8" fill="#8a8a8a"/></svg>
<div id="status" class="a"></div>
<div class="a" style="left:2px;top:806px;font-size:10.3px;color:#111">49,3</div>
<div class="a" style="left:2px;top:826px;font-size:10.3px;color:#111">@0,0</div>
<div class="a" style="left:254px;top:802px;width:1px;height:42px;background:#9a9a9a"></div>
<div class="a" style="left:256px;top:806px;font-size:10.3px;color:#111">49.0918&lt;3.50°</div>
<div class="a" style="left:256px;top:826px;font-size:10.3px;color:#111">@0&lt;0.00°</div>
<div class="sdot" style="left:505.8px;top:818px;width:7px;height:7px"></div>
<div class="sdot" style="left:939.2px;top:818px;width:7px;height:7px"></div>
<div class="sdot" style="left:1268.8px;top:818px;width:7px;height:7px"></div>
<div class="a" style="left:637.7px;top:816px;font-size:10.3px;color:#111">Premier point</div>
<svg class="a" style="left:715px;top:805px;" width="22" height="32" viewBox="0 0 22 32"><path d="M10.5 1.5 C3 1.5 2 6 2 13 L2 22 C2 27 5 30.5 10.5 30.5 C16 30.5 19 27 19 22 L19 13 C19 6 18 1.5 10.5 1.5 Z" fill="#fff" stroke="#333" stroke-width="1"/><path d="M2 13.5 Q10.5 16 19 13.5 M10.5 1.5 V15" fill="none" stroke="#333" stroke-width="0.8"/><rect x="8.8" y="4" width="3.4" height="7" rx="1.7" fill="#fff" stroke="#333" stroke-width="0.8"/></svg>
<div class="a" style="left:754px;top:816px;font-size:10.3px;color:#111">Annuler</div>
<div class="a" style="left:949px;top:811px;font-size:10.3px;color:#111">Entités sélectionnées :</div>
<div class="a" style="left:949px;top:821.5px;font-size:10.3px;color:#111">216 Cercles sur calque "Ventilation".</div>
</body></html>
